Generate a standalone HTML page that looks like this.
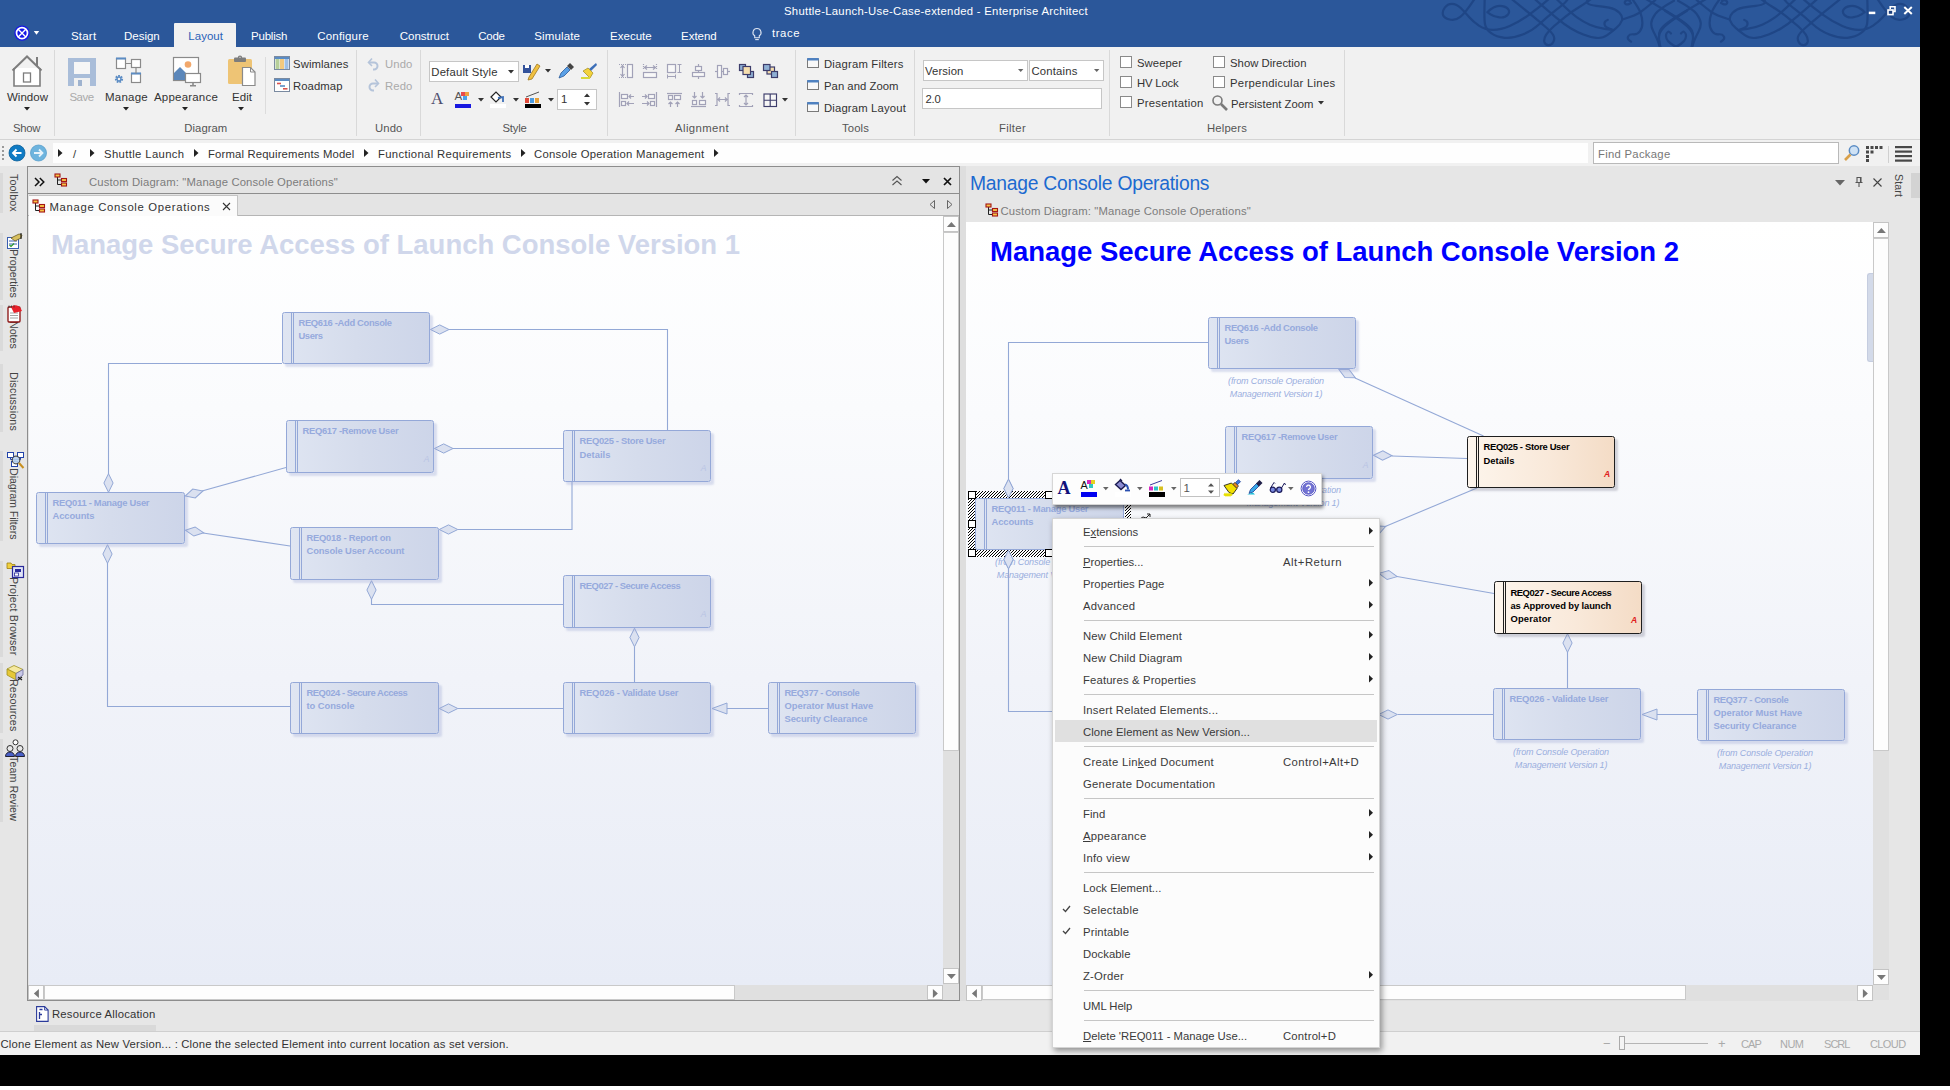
<!DOCTYPE html>
<html><head><meta charset="utf-8"><title>Enterprise Architect</title>
<style>
*{box-sizing:border-box;margin:0;padding:0}
html,body{width:1950px;height:1090px;overflow:hidden;background:#000;font-family:"Liberation Sans",sans-serif;}
.t{position:absolute;white-space:nowrap;display:block}
.r{position:absolute}
svg{position:absolute;overflow:visible}
#win{position:absolute;left:0;top:0;width:1920px;height:1055px;background:#e6e6e6;overflow:hidden}
</style></head><body>
<div id="win">
<div class="r" style="left:0px;top:0px;width:1920px;height:47px;background:#2b579a;"></div>
<svg style="left:1676px;top:0" width="1" height="47" viewBox="0 0 1 47" fill="none" stroke="#1f4686" stroke-width="2.200" stroke-linecap="round" stroke-linejoin="round"><g><path d="M-201.5 -1.0Q-210.5 12.8 -215.7 16.9Q-220.8 21.0 -226.4 19.5Q-232.0 18.0 -233.0 14.8Q-234.0 11.5 -231.2 7.7Q-228.5 3.8 -224.0 3.8Q-219.5 3.8 -215.0 8.3Q-210.5 12.8 -206.7 17.3Q-202.8 21.8 -197.1 25.6Q-191.3 29.5 -183.6 29.8Q-175.9 30.0 -166.3 25.9Q-156.7 21.8 -147.1 14.8Q-137.4 7.7 -132.3 3.4L-127.2 -1.0"/><path d="M-191.3 -1.0Q-192.0 19.0 -191.0 24.2Q-190.0 29.5 -184.8 33.2Q-179.7 37.0 -171.3 37.8Q-163.0 38.5 -153.4 34.6Q-143.8 30.8 -136.2 23.8Q-128.5 16.7 -120.2 10.2Q-111.8 3.8 -109.9 1.4L-108.0 -1.0"/><path d="M-188.7 12.2Q-182.3 5.8 -176.6 5.8Q-170.8 5.8 -168.2 8.7Q-165.6 11.5 -168.2 14.8Q-170.8 18.0 -176.6 17.4Q-182.3 16.7 -185.5 14.4L-188.7 12.2"/><path d="M-164.4 -1.0Q-150.3 10.3 -142.6 16.6Q-134.9 23.0 -129.8 27.5Q-124.6 32.0 -122.7 35.2Q-120.8 38.5 -122.7 42.0Q-124.6 45.5 -127.8 45.2Q-131.0 44.9 -131.7 41.7Q-132.3 38.5 -129.8 34.6Q-127.2 30.8 -122.1 26.3Q-116.9 21.8 -110.5 16.6Q-104.0 11.5 -96.3 6.8Q-88.7 2.0 -86.8 0.5L-84.9 -1.0"/><path d="M-141.3 -1.0Q-127.2 11.5 -119.5 17.9Q-111.8 24.4 -105.4 28.2Q-99.0 32.0 -92.6 34.6Q-86.2 37.2 -79.8 37.9Q-73.3 38.5 -68.8 35.2Q-64.4 32.0 -59.9 28.2Q-55.4 24.4 -54.1 20.5Q-52.8 16.7 -56.6 12.8Q-60.5 9.0 -66.9 7.7Q-73.3 6.4 -79.8 5.8Q-86.2 5.1 -88.1 3.5Q-90.0 2.0 -88.5 0.5L-87.0 -1.0"/><path d="M-63.0 30.0Q-70.8 27.6 -71.4 24.7Q-72.0 21.8 -70.1 20.9L-68.2 19.9"/><path d="M-119.5 -1.0Q-105.4 12.8 -99.0 17.3Q-92.6 21.8 -86.2 24.7Q-79.7 27.6 -71.3 28.8L-63.0 30.0"/><path d="M-52.8 19.2Q-40.0 15.4 -34.9 11.6Q-29.7 7.7 -25.9 4.5Q-22.0 1.3 -21.0 0.2L-20.0 -1.0"/><path d="M-43.8 -1.0Q-37.4 7.7 -35.5 12.8Q-33.6 18.0 -33.6 23.1Q-33.6 28.2 -36.2 31.4Q-38.7 34.6 -42.5 34.3Q-46.4 34.0 -47.7 36.2Q-49.0 38.5 -47.0 40.1L-45.0 41.7"/><path d="M-30.0 -1.0Q-15.0 8.0 -7.3 12.4Q0.3 16.8 7.3 21.9Q14.3 27.0 16.0 30.8Q17.6 34.5 16.8 41.2L15.9 48.0"/><path d="M-2.1 0.8Q-16.9 9.0 -20.6 13.9Q-24.3 18.9 -24.7 22.9Q-25.1 27.0 -22.6 31.5Q-20.2 36.0 -18.5 40.1Q-16.9 44.3 -16.4 46.1L-16.0 48.0"/><path d="M11.0 10.7Q-6.2 21.3 -11.1 26.2Q-16.0 31.2 -16.9 34.9Q-17.7 38.6 -16.5 43.3L-15.3 48.0"/><path d="M-5.0 33.5Q-7.0 31.0 -8.2 32.0Q-9.5 33.0 -9.9 34.5Q-10.3 36.0 -9.5 38.5Q-8.7 41.0 -5.3 43.5Q-2.0 46.0 -1.0 46.2L0.0 46.5"/><path d="M-46.0 1.0Q-49.0 -0.5 -50.5 1.0Q-52.0 2.5 -50.5 3.8Q-49.0 5.0 -47.0 4.0L-45.0 3.0"/></g><g transform="scale(-1 1)"><path d="M-201.5 -1.0Q-210.5 12.8 -215.7 16.9Q-220.8 21.0 -226.4 19.5Q-232.0 18.0 -233.0 14.8Q-234.0 11.5 -231.2 7.7Q-228.5 3.8 -224.0 3.8Q-219.5 3.8 -215.0 8.3Q-210.5 12.8 -206.7 17.3Q-202.8 21.8 -197.1 25.6Q-191.3 29.5 -183.6 29.8Q-175.9 30.0 -166.3 25.9Q-156.7 21.8 -147.1 14.8Q-137.4 7.7 -132.3 3.4L-127.2 -1.0"/><path d="M-191.3 -1.0Q-192.0 19.0 -191.0 24.2Q-190.0 29.5 -184.8 33.2Q-179.7 37.0 -171.3 37.8Q-163.0 38.5 -153.4 34.6Q-143.8 30.8 -136.2 23.8Q-128.5 16.7 -120.2 10.2Q-111.8 3.8 -109.9 1.4L-108.0 -1.0"/><path d="M-188.7 12.2Q-182.3 5.8 -176.6 5.8Q-170.8 5.8 -168.2 8.7Q-165.6 11.5 -168.2 14.8Q-170.8 18.0 -176.6 17.4Q-182.3 16.7 -185.5 14.4L-188.7 12.2"/><path d="M-164.4 -1.0Q-150.3 10.3 -142.6 16.6Q-134.9 23.0 -129.8 27.5Q-124.6 32.0 -122.7 35.2Q-120.8 38.5 -122.7 42.0Q-124.6 45.5 -127.8 45.2Q-131.0 44.9 -131.7 41.7Q-132.3 38.5 -129.8 34.6Q-127.2 30.8 -122.1 26.3Q-116.9 21.8 -110.5 16.6Q-104.0 11.5 -96.3 6.8Q-88.7 2.0 -86.8 0.5L-84.9 -1.0"/><path d="M-141.3 -1.0Q-127.2 11.5 -119.5 17.9Q-111.8 24.4 -105.4 28.2Q-99.0 32.0 -92.6 34.6Q-86.2 37.2 -79.8 37.9Q-73.3 38.5 -68.8 35.2Q-64.4 32.0 -59.9 28.2Q-55.4 24.4 -54.1 20.5Q-52.8 16.7 -56.6 12.8Q-60.5 9.0 -66.9 7.7Q-73.3 6.4 -79.8 5.8Q-86.2 5.1 -88.1 3.5Q-90.0 2.0 -88.5 0.5L-87.0 -1.0"/><path d="M-63.0 30.0Q-70.8 27.6 -71.4 24.7Q-72.0 21.8 -70.1 20.9L-68.2 19.9"/><path d="M-119.5 -1.0Q-105.4 12.8 -99.0 17.3Q-92.6 21.8 -86.2 24.7Q-79.7 27.6 -71.3 28.8L-63.0 30.0"/><path d="M-52.8 19.2Q-40.0 15.4 -34.9 11.6Q-29.7 7.7 -25.9 4.5Q-22.0 1.3 -21.0 0.2L-20.0 -1.0"/><path d="M-43.8 -1.0Q-37.4 7.7 -35.5 12.8Q-33.6 18.0 -33.6 23.1Q-33.6 28.2 -36.2 31.4Q-38.7 34.6 -42.5 34.3Q-46.4 34.0 -47.7 36.2Q-49.0 38.5 -47.0 40.1L-45.0 41.7"/><path d="M-30.0 -1.0Q-15.0 8.0 -7.3 12.4Q0.3 16.8 7.3 21.9Q14.3 27.0 16.0 30.8Q17.6 34.5 16.8 41.2L15.9 48.0"/><path d="M-2.1 0.8Q-16.9 9.0 -20.6 13.9Q-24.3 18.9 -24.7 22.9Q-25.1 27.0 -22.6 31.5Q-20.2 36.0 -18.5 40.1Q-16.9 44.3 -16.4 46.1L-16.0 48.0"/><path d="M11.0 10.7Q-6.2 21.3 -11.1 26.2Q-16.0 31.2 -16.9 34.9Q-17.7 38.6 -16.5 43.3L-15.3 48.0"/><path d="M-5.0 33.5Q-7.0 31.0 -8.2 32.0Q-9.5 33.0 -9.9 34.5Q-10.3 36.0 -9.5 38.5Q-8.7 41.0 -5.3 43.5Q-2.0 46.0 -1.0 46.2L0.0 46.5"/><path d="M-46.0 1.0Q-49.0 -0.5 -50.5 1.0Q-52.0 2.5 -50.5 3.8Q-49.0 5.0 -47.0 4.0L-45.0 3.0"/></g></svg>
<div class="r" style="left:1430px;top:47px;width:480px;height:3px;background:#f1f1f1;"></div>
<svg style="left:1860px;top:0" width="60" height="22" viewBox="0 0 60 22"><g stroke="#fff" fill="none">
<path d="M8.800 12.900h6.500" stroke-width="2.500"/><path d="M30.200 9v-2.300h4.800v4.800h-2" stroke-width="1.600"/><rect x="28" y="10" width="5" height="4.600" stroke-width="1.600" fill="#1d4080"/><path d="M44.300 7l7.500 7M51.800 7l-7.500 7" stroke-width="2"/></g></svg>
<span class="t" style="left:784.0px;top:3.5px;font-size:11.3px;line-height:15px;color:#fff;letter-spacing:0.286px;">Shuttle-Launch-Use-Case-extended - Enterprise Architect</span>
<svg style="left:12px;top:24px" width="34" height="18" viewBox="0 0 34 18">
<circle cx="10" cy="9.100" r="7.700" fill="#1616e8"/><circle cx="10" cy="9.100" r="5.500" fill="none" stroke="#fff" stroke-width="1.700"/><path d="M6.200 5.300l7.600 7.600M13.800 5.300l-7.600 7.600" stroke="#fff" stroke-width="1.400"/>
<path d="M21.800 7h5.400l-2.700 3.700z" fill="#fff"/></svg>
<div class="r" style="left:174px;top:23px;width:62px;height:25px;background:#f1f1f1;border-radius:1px 1px 0 0;"></div>
<span class="t" style="left:71.0px;top:28.5px;font-size:11.5px;line-height:15px;color:#fff;letter-spacing:0.203px;">Start</span>
<span class="t" style="left:124.0px;top:28.5px;font-size:11.5px;line-height:15px;color:#fff;letter-spacing:-0.016px;">Design</span>
<span class="t" style="left:188.3px;top:28.5px;font-size:11.5px;line-height:15px;color:#2b62b8;letter-spacing:0.029px;">Layout</span>
<span class="t" style="left:251.0px;top:28.5px;font-size:11.5px;line-height:15px;color:#fff;letter-spacing:-0.202px;">Publish</span>
<span class="t" style="left:317.3px;top:28.5px;font-size:11.5px;line-height:15px;color:#fff;letter-spacing:0.171px;">Configure</span>
<span class="t" style="left:399.7px;top:28.5px;font-size:11.5px;line-height:15px;color:#fff;letter-spacing:0.010px;">Construct</span>
<span class="t" style="left:478.3px;top:28.5px;font-size:11.5px;line-height:15px;color:#fff;letter-spacing:-0.273px;">Code</span>
<span class="t" style="left:534.3px;top:28.5px;font-size:11.5px;line-height:15px;color:#fff;letter-spacing:0.120px;">Simulate</span>
<span class="t" style="left:610.0px;top:28.5px;font-size:11.5px;line-height:15px;color:#fff;letter-spacing:0.021px;">Execute</span>
<span class="t" style="left:681.0px;top:28.5px;font-size:11.5px;line-height:15px;color:#fff;letter-spacing:-0.017px;">Extend</span>
<span class="t" style="left:772.0px;top:25.5px;font-size:11.3px;line-height:15px;color:#fff;letter-spacing:0.576px;">trace</span>
<svg style="left:750px;top:27px" width="14" height="16" viewBox="0 0 14 16" fill="none" stroke="#dfe6f2" stroke-width="1.1"><path d="M7 1.5a4 4 0 0 0-2.3 7.3v2h4.6v-2A4 4 0 0 0 7 1.5z"/><path d="M5.2 12.6h3.6"/></svg>
<div class="r" style="left:0px;top:47px;width:1920px;height:93px;background:#f1f1f1;"></div>
<div class="r" style="left:0px;top:139px;width:1920px;height:1px;background:#d4d4d4;"></div>
<div class="r" style="left:54px;top:50px;width:1px;height:86px;background:#d9d9d9;"></div>
<div class="r" style="left:356px;top:50px;width:1px;height:86px;background:#d9d9d9;"></div>
<div class="r" style="left:420px;top:50px;width:1px;height:86px;background:#d9d9d9;"></div>
<div class="r" style="left:607px;top:50px;width:1px;height:86px;background:#d9d9d9;"></div>
<div class="r" style="left:795px;top:50px;width:1px;height:86px;background:#d9d9d9;"></div>
<div class="r" style="left:914px;top:50px;width:1px;height:86px;background:#d9d9d9;"></div>
<div class="r" style="left:1109px;top:50px;width:1px;height:86px;background:#d9d9d9;"></div>
<div class="r" style="left:1344px;top:50px;width:1px;height:86px;background:#d9d9d9;"></div>
<div class="r" style="left:265px;top:57px;width:1px;height:57px;background:#dcdcdc;"></div>
<span class="t" style="left:13.0px;top:120.5px;font-size:11.3px;line-height:15px;color:#555;letter-spacing:-0.317px;">Show</span>
<span class="t" style="left:184.3px;top:120.5px;font-size:11.3px;line-height:15px;color:#555;letter-spacing:0.043px;">Diagram</span>
<span class="t" style="left:375.0px;top:120.5px;font-size:11.3px;line-height:15px;color:#555;letter-spacing:0.121px;">Undo</span>
<span class="t" style="left:502.5px;top:120.5px;font-size:11.3px;line-height:15px;color:#555;letter-spacing:-0.224px;">Style</span>
<span class="t" style="left:675.0px;top:120.5px;font-size:11.3px;line-height:15px;color:#555;letter-spacing:0.417px;">Alignment</span>
<span class="t" style="left:842.0px;top:120.5px;font-size:11.3px;line-height:15px;color:#555;letter-spacing:0.124px;">Tools</span>
<span class="t" style="left:999.0px;top:120.5px;font-size:11.3px;line-height:15px;color:#555;letter-spacing:0.315px;">Filter</span>
<span class="t" style="left:1207.0px;top:120.5px;font-size:11.3px;line-height:15px;color:#555;letter-spacing:0.152px;">Helpers</span>
<span class="t" style="left:7.0px;top:89.8px;font-size:11.5px;line-height:15px;color:#333;letter-spacing:0.017px;">Window</span>
<span class="t" style="left:69.5px;top:89.8px;font-size:11.5px;line-height:15px;color:#aaa;letter-spacing:-0.553px;">Save</span>
<span class="t" style="left:105.0px;top:89.8px;font-size:11.5px;line-height:15px;color:#333;letter-spacing:0.241px;">Manage</span>
<span class="t" style="left:154.0px;top:89.8px;font-size:11.5px;line-height:15px;color:#333;letter-spacing:0.198px;">Appearance</span>
<span class="t" style="left:232.0px;top:89.8px;font-size:11.5px;line-height:15px;color:#333;letter-spacing:0.046px;">Edit</span>
<svg style="left:24px;top:107px" width="7" height="4" viewBox="0 0 7 4"><path d="M0 0h6l-3 3.4z" fill="#222"/></svg>
<svg style="left:123px;top:107px" width="7" height="4" viewBox="0 0 7 4"><path d="M0 0h6l-3 3.4z" fill="#222"/></svg>
<svg style="left:182px;top:107px" width="7" height="4" viewBox="0 0 7 4"><path d="M0 0h6l-3 3.4z" fill="#222"/></svg>
<svg style="left:238px;top:107px" width="7" height="4" viewBox="0 0 7 4"><path d="M0 0h6l-3 3.4z" fill="#222"/></svg>
<svg style="left:11px;top:54px" width="34" height="34" viewBox="0 0 34 34" fill="none">
<path d="M3 14v18h26V14" fill="#fff" stroke="#7d7d7d" stroke-width="1.6"/><path d="M1.5 16.5L16 2.5l14.5 14" stroke="#7d7d7d" stroke-width="2"/><path d="M26 3v9" stroke="#7d7d7d" stroke-width="2"/><rect x="12.5" y="19" width="7" height="9" fill="#fff" stroke="#7d7d7d" stroke-width="1.3"/></svg>
<svg style="left:68px;top:58px" width="28" height="28" viewBox="0 0 28 28"><rect width="28" height="28" fill="#a9bdd9"/><rect x="6" y="4" width="16" height="12" fill="#f6f6f6"/><rect x="6" y="20" width="16" height="8" fill="#f1f1f1"/><rect x="10" y="22" width="4" height="6" fill="#9fb3cf"/></svg>
<svg style="left:113px;top:56px" width="30" height="30" viewBox="0 0 30 30" fill="none"><g stroke="#8a8a8a" stroke-width="1.2" fill="#fff"><rect x="3.5" y="2.5" width="9" height="10"/><rect x="18.5" y="3.5" width="9" height="8"/><rect x="18.5" y="17.5" width="9" height="9"/></g><path d="M3 2.5h10M18 17.5h10" stroke="#5b8cc4" stroke-width="1.8"/><path d="M12.5 7.5h6M23 11.5v6" stroke="#8a8a8a" stroke-width="1.2"/><circle cx="6" cy="23" r="3" stroke="#5b8cc4" stroke-width="2.2" stroke-dasharray="1.6 1"/><circle cx="6" cy="23" r="2" stroke="#5b8cc4" stroke-width="1.4"/></svg>
<svg style="left:172px;top:56px" width="30" height="31" viewBox="0 0 30 31" fill="none"><rect x="1.5" y="1.5" width="25" height="23" fill="#fff" stroke="#8a8a8a" stroke-width="1.2"/><path d="M2 24V17l6-6 7 7v6z" fill="#5b87ba"/><circle cx="16" cy="8.5" r="3.3" fill="#f2a86b"/><rect x="13.5" y="17.5" width="15" height="9" fill="#fff" stroke="#8a8a8a" stroke-width="1.2"/><path d="M21 26.5v3M18 29.8h6" stroke="#8a8a8a" stroke-width="1.6"/></svg>
<svg style="left:227px;top:55px" width="30" height="32" viewBox="0 0 30 32" fill="none"><rect x="1" y="4" width="24" height="25" rx="1.5" fill="#eec475"/><rect x="7" y="2.5" width="12" height="4.5" rx="1" fill="#7d7d7d"/><circle cx="13" cy="2.8" r="1.6" stroke="#7d7d7d" stroke-width="1.2"/><path d="M15.5 12.5h8l4.5 4.5v13.5h-12.5z" fill="#fff" stroke="#8a8a8a" stroke-width="1.2"/><path d="M23.5 12.5v4.5h4.5" stroke="#8a8a8a" stroke-width="1"/></svg>
<svg style="left:274px;top:56px" width="16" height="14" viewBox="0 0 16 14"><rect x=".5" y=".5" width="15" height="13" fill="#fff" stroke="#7a8aa0"/><rect x="1" y="1" width="14" height="2" fill="#5b8cc4"/><rect x="1.5" y="3" width="4" height="10" fill="#b6cf9a"/><rect x="6" y="3" width="4" height="10" fill="#f2c97e"/><rect x="10.5" y="3" width="4" height="10" fill="#9fc0e6"/></svg>
<svg style="left:274px;top:78px" width="16" height="14" viewBox="0 0 16 14"><rect x=".5" y=".5" width="15" height="13" fill="#fff" stroke="#7a8aa0"/><rect x="1" y="1" width="14" height="2" fill="#5b8cc4"/><path d="M3 5.5h4" stroke="#d9534f" stroke-width="1.6"/><path d="M6 8h5" stroke="#5b8cc4" stroke-width="1.6"/><path d="M9 10.8h4.5" stroke="#d9534f" stroke-width="1.6"/></svg>
<span class="t" style="left:293.0px;top:56.5px;font-size:11.3px;line-height:15px;color:#333;letter-spacing:0.096px;">Swimlanes</span>
<span class="t" style="left:293.0px;top:78.5px;font-size:11.3px;line-height:15px;color:#333;letter-spacing:0.072px;">Roadmap</span>
<svg style="left:367px;top:57px" width="14" height="13" viewBox="0 0 14 13" fill="none" stroke="#b5c4da" stroke-width="2"><path d="M2 5.5h5a3.5 3.5 0 0 1 0 7H6"/><path d="M5 1.5L1.5 5.5 5 9" stroke-width="1.6"/></svg>
<svg style="left:366px;top:78px" width="14" height="13" viewBox="0 0 14 13" fill="none" stroke="#b5c4da" stroke-width="2"><path d="M12 5.5H7a3.5 3.5 0 0 0 0 7h1"/><path d="M9 1.5l3.5 4L9 9" stroke-width="1.6"/></svg>
<span class="t" style="left:385.0px;top:56.5px;font-size:11.3px;line-height:15px;color:#aaa;letter-spacing:0.121px;">Undo</span>
<span class="t" style="left:385.0px;top:78.5px;font-size:11.3px;line-height:15px;color:#aaa;letter-spacing:0.121px;">Redo</span>
<div class="r" style="left:429px;top:60.5px;width:89.5px;height:21px;background:#fff;border:1px solid #c6c6c6;"></div>
<span class="t" style="left:431.3px;top:64.5px;font-size:11.3px;line-height:15px;color:#333;letter-spacing:0.187px;">Default Style</span>
<svg style="left:508px;top:70px" width="6" height="4"><path d="M0 0h6l-3 3.4z" fill="#333"/></svg>
<svg style="left:522px;top:62px" width="20" height="18" viewBox="0 0 20 18"><rect x="1" y="3" width="8" height="8" fill="#33529a"/><rect x="3" y="3" width="4" height="3" fill="#fff"/><path d="M7 15L15 2l3 2-8 13-4 1z" fill="#f0c040" stroke="#a07820" stroke-width=".8"/></svg>
<svg style="left:545px;top:69px" width="6" height="4"><path d="M0 0h6l-3 3.4z" fill="#333"/></svg>
<svg style="left:557px;top:62px" width="18" height="18" viewBox="0 0 18 18"><path d="M2 16l2-5 6-6 3 3-6 6z" fill="#5aa0e6" stroke="#2a5a9a" stroke-width=".8"/><path d="M10 4l3-3 4 4-3 3z" fill="#444"/></svg>
<svg style="left:580px;top:62px" width="18" height="18" viewBox="0 0 18 18"><path d="M16 1l1 2-6 6-2-2z" fill="#3d6fb8"/><path d="M3 9l5-3 5 5-3 5z" fill="#f3d23c" stroke="#a08a20" stroke-width=".7"/><path d="M1 16h9" stroke="#d8d838" stroke-width="2"/></svg>
<span class="t" style="left:431.0px;top:87.5px;font-size:17px;line-height:22px;color:#4e4e6e;font-family:'Liberation Serif',serif;">A</span>
<span class="t" style="left:454.5px;top:89.0px;font-size:11.5px;line-height:15px;color:#555;">A</span>
<div class="r" style="left:461px;top:92px;width:4px;height:3.5px;background:#e84a4a;"></div><div class="r" style="left:465px;top:92px;width:4px;height:3.5px;background:#f0a040;"></div><div class="r" style="left:463px;top:95.5px;width:4px;height:4px;background:#4aa0e8;"></div>
<div class="r" style="left:455px;top:104px;width:16px;height:3.5px;background:#1818e0;"></div>
<svg style="left:478px;top:98px" width="6" height="4"><path d="M0 0h6l-3 3.4z" fill="#333"/></svg>
<svg style="left:489px;top:90px" width="18" height="16" viewBox="0 0 18 16" fill="none"><path d="M2 7l5-5 5 5-5 5z" stroke="#222" stroke-width="1.2" fill="#fff"/><path d="M9 8l5-1v5" stroke="#3d6fb8" stroke-width="1.8"/></svg>
<div class="r" style="left:490px;top:104px;width:16px;height:3.5px;background:#fff;"></div>
<svg style="left:513px;top:98px" width="6" height="4"><path d="M0 0h6l-3 3.4z" fill="#333"/></svg>
<svg style="left:524px;top:90px" width="18" height="14" viewBox="0 0 18 14"><path d="M2 7L15 2" stroke="#555" stroke-width="1"/><rect x="1" y="8" width="4" height="5" fill="#e04a3a"/><rect x="6" y="8" width="4" height="5" fill="#4a9ae0"/><rect x="11" y="8" width="4" height="5" fill="#e6a03a"/></svg>
<div class="r" style="left:525px;top:104px;width:16px;height:3.5px;background:#000;"></div>
<svg style="left:548px;top:98px" width="6" height="4"><path d="M0 0h6l-3 3.4z" fill="#333"/></svg>
<div class="r" style="left:557px;top:89px;width:40px;height:21px;background:#fff;border:1px solid #c6c6c6;"></div>
<span class="t" style="left:561.0px;top:92.0px;font-size:11.3px;line-height:15px;color:#333;">1</span>
<svg style="left:584px;top:93px" width="7" height="13"><path d="M0 4h6l-3-3.4zM0 9h6l-3 3.4z" fill="#333"/></svg>
<svg style="left:617px;top:62px" width="18" height="18" viewBox="0 0 18 18" fill="none" stroke="#a2a2b8" stroke-width="1.2"><path d="M2 2.500h7M2 15.500h7" stroke-dasharray="1 1"/><path d="M5.500 3.500v11M3.500 6l2-2.500 2 2.500M3.500 12l2 2.500 2-2.500"/><rect x="10.500" y="2.500" width="5" height="13" fill="#f8f8f8"/></svg>
<svg style="left:641px;top:62px" width="18" height="18" viewBox="0 0 18 18" fill="none" stroke="#a2a2b8" stroke-width="1.2"><path d="M2.500 2v6M15.500 2v6" stroke-dasharray="1 1"/><path d="M3.500 5.500h11M6 3.500l-2.500 2 2.500 2M12 3.500l2.500 2-2.500 2"/><rect x="2.500" y="10.500" width="13" height="5" fill="#f8f8f8"/></svg>
<svg style="left:665px;top:62px" width="18" height="18" viewBox="0 0 18 18" fill="none" stroke="#a2a2b8" stroke-width="1.2"><rect x="2.500" y="2.500" width="8" height="8" fill="#f8f8f8"/><path d="M14.500 2.500v8M12.500 2.500h4M12.500 10.500h4M2.500 14.500h8M2.500 12.500v4M10.500 12.500v4" stroke-width="1"/></svg>
<svg style="left:689px;top:62px" width="18" height="18" viewBox="0 0 18 18" fill="none" stroke="#a2a2b8" stroke-width="1.2"><path d="M9.500 2v15"/><rect x="6.500" y="4.500" width="6" height="4" fill="#f8f8f8"/><rect x="3.500" y="10.500" width="12" height="4" fill="#f8f8f8"/></svg>
<svg style="left:713px;top:62px" width="18" height="18" viewBox="0 0 18 18" fill="none" stroke="#a2a2b8" stroke-width="1.2"><path d="M2 9.500h15"/><rect x="4.500" y="3.500" width="4" height="12" fill="#f8f8f8"/><rect x="10.500" y="6.500" width="4" height="6" fill="#f8f8f8"/></svg>
<svg style="left:737px;top:62px" width="18" height="18" viewBox="0 0 18 18" stroke="#3d3d6b" stroke-width="1.200"><rect x="2.500" y="2.500" width="6" height="6" fill="#8fb0d4"/><rect x="10.500" y="9.500" width="6" height="6" fill="#8fb0d4"/><rect x="6" y="4.500" width="7.500" height="8" fill="#f5deae"/></svg>
<svg style="left:761px;top:62px" width="18" height="18" viewBox="0 0 18 18" stroke="#3d3d6b" stroke-width="1.200"><rect x="6" y="5" width="7.500" height="7" fill="#f5deae"/><rect x="2.500" y="2.500" width="6.500" height="6" fill="#8fb0d4"/><rect x="10.500" y="9.500" width="6" height="6" fill="#8fb0d4"/></svg>
<svg style="left:617px;top:91px" width="18" height="18" viewBox="0 0 18 18" fill="none" stroke="#a2a2b8" stroke-width="1.2"><path d="M2.500 1v15"/><rect x="4.500" y="3.500" width="6" height="4" fill="#f8f8f8"/><rect x="4.500" y="10.500" width="4" height="4" fill="#f8f8f8"/><path d="M17 5.500h-5M14 3.500l-2 2 2 2M17 12.500h-7M12 10.500l-2 2 2 2"/></svg>
<svg style="left:641px;top:91px" width="18" height="18" viewBox="0 0 18 18" fill="none" stroke="#a2a2b8" stroke-width="1.2"><path d="M15.500 1v15"/><rect x="7.500" y="3.500" width="6" height="4" fill="#f8f8f8"/><rect x="9.500" y="10.500" width="4" height="4" fill="#f8f8f8"/><path d="M1 5.500h5M4 3.500l2 2-2 2M1 12.500h7M6 10.500l2 2-2 2"/></svg>
<svg style="left:665px;top:91px" width="18" height="18" viewBox="0 0 18 18" fill="none" stroke="#a2a2b8" stroke-width="1.2"><path d="M2 2.500h15"/><rect x="3.500" y="4.500" width="4" height="4" fill="#f8f8f8"/><rect x="9.500" y="4.500" width="6" height="4" fill="#f8f8f8"/><path d="M5.500 16v-5M3.500 13l2-2 2 2M12.500 16v-5M10.500 13l2-2 2 2"/></svg>
<svg style="left:689px;top:91px" width="18" height="18" viewBox="0 0 18 18" fill="none" stroke="#a2a2b8" stroke-width="1.2"><path d="M2 15.500h15"/><rect x="3.500" y="9.500" width="4" height="4" fill="#f8f8f8"/><rect x="10.500" y="9.500" width="6" height="4" fill="#f8f8f8"/><path d="M5.500 1v6M3.500 5l2 2 2-2M13.500 1v6M11.500 5l2 2 2-2"/></svg>
<svg style="left:713px;top:91px" width="18" height="18" viewBox="0 0 18 18" fill="none" stroke="#a2a2b8" stroke-width="1.2"><path d="M2 2.500h2v12H2M17 2.500h-2v12h2M5 8.500h9M7 6.500l-2 2 2 2M12 6.500l2 2-2 2"/></svg>
<svg style="left:737px;top:91px" width="18" height="18" viewBox="0 0 18 18" fill="none" stroke="#a2a2b8" stroke-width="1.2"><path d="M2.500 4v-1.500h13V4M2.500 14v1.500h13V14M9 4v10M7 6l2-2 2 2M7 12l2 2 2-2"/></svg>
<svg style="left:762px;top:92px" width="16" height="16" viewBox="0 0 16 16" fill="#f6f6f6" stroke="#3d3d6b" stroke-width="1.150"><rect x="2" y="2" width="12.500" height="12.500"/><path d="M8.200 2v12.500M2 8.200h12.500"/></svg>
<svg style="left:782px;top:98px" width="6" height="4"><path d="M0 0h6l-3 3.400z" fill="#333"/></svg>
<svg style="left:807px;top:58px" width="12" height="10" viewBox="0 0 12 10"><rect x=".5" y="1" width="11" height="8.500" fill="#f8f8f8" stroke="#7a7a7a"/><rect x="0" y="0" width="12" height="2.600" rx="1" fill="#4f81c0"/></svg>
<svg style="left:807px;top:80px" width="12" height="10" viewBox="0 0 12 10"><rect x=".5" y="1" width="11" height="8.500" fill="#f8f8f8" stroke="#7a7a7a"/><rect x="0" y="0" width="12" height="2.600" rx="1" fill="#4f81c0"/></svg>
<svg style="left:807px;top:102px" width="12" height="10" viewBox="0 0 12 10"><rect x=".5" y="1" width="11" height="8.500" fill="#f8f8f8" stroke="#7a7a7a"/><rect x="0" y="0" width="12" height="2.600" rx="1" fill="#4f81c0"/></svg>
<span class="t" style="left:824.0px;top:56.5px;font-size:11.3px;line-height:15px;color:#333;letter-spacing:0.193px;">Diagram Filters</span>
<span class="t" style="left:824.0px;top:78.5px;font-size:11.3px;line-height:15px;color:#333;letter-spacing:0.032px;">Pan and Zoom</span>
<span class="t" style="left:824.0px;top:100.5px;font-size:11.3px;line-height:15px;color:#333;letter-spacing:0.160px;">Diagram Layout</span>
<div class="r" style="left:923px;top:60px;width:104.5px;height:20.5px;background:#fff;border:1px solid #c6c6c6;"></div>
<div class="r" style="left:1029px;top:60px;width:74.5px;height:20.5px;background:#fff;border:1px solid #c6c6c6;"></div>
<div class="r" style="left:922px;top:88px;width:180px;height:21px;background:#fff;border:1px solid #c6c6c6;"></div>
<span class="t" style="left:925.0px;top:63.5px;font-size:11.3px;line-height:15px;color:#333;letter-spacing:0.116px;">Version</span>
<span class="t" style="left:1031.5px;top:63.5px;font-size:11.3px;line-height:15px;color:#333;letter-spacing:0.175px;">Contains</span>
<span class="t" style="left:925.5px;top:91.5px;font-size:11.3px;line-height:15px;color:#333;letter-spacing:-0.236px;">2.0</span>
<svg style="left:1017.500px;top:69px" width="6" height="4"><path d="M0 0h5.400l-2.700 3.100z" fill="#666"/></svg>
<svg style="left:1093.500px;top:69px" width="6" height="4"><path d="M0 0h5.400l-2.700 3.100z" fill="#666"/></svg>
<div class="r" style="left:1120px;top:56px;width:12px;height:12px;background:#fff;border:1px solid #8a8a8a;"></div>
<div class="r" style="left:1120px;top:76px;width:12px;height:12px;background:#fff;border:1px solid #8a8a8a;"></div>
<div class="r" style="left:1120px;top:96px;width:12px;height:12px;background:#fff;border:1px solid #8a8a8a;"></div>
<div class="r" style="left:1213px;top:56px;width:12px;height:12px;background:#fff;border:1px solid #8a8a8a;"></div>
<div class="r" style="left:1213px;top:76px;width:12px;height:12px;background:#fff;border:1px solid #8a8a8a;"></div>
<span class="t" style="left:1137.0px;top:55.5px;font-size:11.3px;line-height:15px;color:#333;letter-spacing:0.057px;">Sweeper</span>
<span class="t" style="left:1137.0px;top:75.5px;font-size:11.3px;line-height:15px;color:#333;letter-spacing:-0.172px;">HV Lock</span>
<span class="t" style="left:1137.0px;top:95.5px;font-size:11.3px;line-height:15px;color:#333;letter-spacing:0.255px;">Presentation</span>
<span class="t" style="left:1230.0px;top:55.5px;font-size:11.3px;line-height:15px;color:#333;letter-spacing:0.036px;">Show Direction</span>
<span class="t" style="left:1230.0px;top:75.5px;font-size:11.3px;line-height:15px;color:#333;letter-spacing:0.296px;">Perpendicular Lines</span>
<span class="t" style="left:1231.0px;top:96.5px;font-size:11.3px;line-height:15px;color:#333;letter-spacing:0.016px;">Persistent Zoom</span>
<svg style="left:1211px;top:94px" width="18" height="18" viewBox="0 0 18 18" fill="none"><circle cx="6.500" cy="6.500" r="4.500" stroke="#7a7a7a" stroke-width="1.600" fill="#f1f1f1"/><path d="M10 10l6 6" stroke="#7a7a7a" stroke-width="2.600"/></svg>
<svg style="left:1318px;top:101px" width="6" height="4"><path d="M0 0h6l-3 3.400z" fill="#333"/></svg>
<div class="r" style="left:0px;top:140px;width:1920px;height:26px;background:#f1f1f1;"></div>
<div class="r" style="left:53px;top:143px;width:1535px;height:20px;background:#fefefe;"></div>
<div class="r" style="left:2px;top:146px;width:1.5px;height:1.5px;background:#999;"></div><div class="r" style="left:2px;top:150px;width:1.5px;height:1.5px;background:#999;"></div><div class="r" style="left:2px;top:154px;width:1.5px;height:1.5px;background:#999;"></div><div class="r" style="left:2px;top:158px;width:1.5px;height:1.5px;background:#999;"></div>
<svg style="left:8px;top:144px" width="40" height="18" viewBox="0 0 40 18"><circle cx="9" cy="9" r="8" fill="#0f7bc4"/><circle cx="9" cy="9" r="8" fill="none" stroke="#0a5e98" stroke-width=".8"/><path d="M13.500 9H5M8.500 5.500L5 9l3.500 3.500" stroke="#fff" stroke-width="1.800" fill="none"/>
<circle cx="30.500" cy="9" r="8" fill="#6eb4de"/><circle cx="30.500" cy="9" r="8" fill="none" stroke="#5aa0cc" stroke-width=".8"/><path d="M26 9h8.500M31 5.500l3.500 3.500-3.500 3.500" stroke="#e8f3fa" stroke-width="1.800" fill="none"/></svg>
<svg style="left:58px;top:149px" width="5" height="8" viewBox="0 0 5 8"><path d="M0 0l4.500 4L0 8z" fill="#222"/></svg>
<svg style="left:90px;top:149px" width="5" height="8" viewBox="0 0 5 8"><path d="M0 0l4.500 4L0 8z" fill="#222"/></svg>
<svg style="left:194px;top:149px" width="5" height="8" viewBox="0 0 5 8"><path d="M0 0l4.500 4L0 8z" fill="#222"/></svg>
<svg style="left:364px;top:149px" width="5" height="8" viewBox="0 0 5 8"><path d="M0 0l4.500 4L0 8z" fill="#222"/></svg>
<svg style="left:521px;top:149px" width="5" height="8" viewBox="0 0 5 8"><path d="M0 0l4.500 4L0 8z" fill="#222"/></svg>
<svg style="left:714px;top:149px" width="5" height="8" viewBox="0 0 5 8"><path d="M0 0l4.500 4L0 8z" fill="#222"/></svg>
<span class="t" style="left:73.0px;top:147.0px;font-size:11.3px;line-height:15px;color:#333;">/</span>
<span class="t" style="left:104.0px;top:147.0px;font-size:11.3px;line-height:15px;color:#333;letter-spacing:0.365px;">Shuttle Launch</span>
<span class="t" style="left:208.0px;top:147.0px;font-size:11.3px;line-height:15px;color:#333;letter-spacing:0.158px;">Formal Requirements Model</span>
<span class="t" style="left:378.0px;top:147.0px;font-size:11.3px;line-height:15px;color:#333;letter-spacing:0.343px;">Functional Requirements</span>
<span class="t" style="left:534.0px;top:147.0px;font-size:11.3px;line-height:15px;color:#333;letter-spacing:0.257px;">Console Operation Management</span>
<div class="r" style="left:1593px;top:142.3px;width:245.5px;height:21.7px;background:#fff;border:1px solid #b9b9b9;"></div>
<span class="t" style="left:1598.0px;top:146.5px;font-size:11.3px;line-height:15px;color:#777;letter-spacing:0.284px;">Find Package</span>
<svg style="left:1842px;top:144px" width="20" height="18" viewBox="0 0 20 18" fill="none"><circle cx="12" cy="6.500" r="4.700" fill="#cfe2f5" stroke="#5b8cc4" stroke-width="1.500"/><path d="M8.500 10.500L3 16" stroke="#d9a04a" stroke-width="2.600"/></svg>
<svg style="left:1866px;top:146px" width="18" height="16" viewBox="0 0 18 16" fill="#484848"><rect x="0" y="0" width="3" height="3"/><rect x="4.500" y="0" width="3" height="3"/><rect x="9" y="0" width="3" height="3"/><rect x="13.500" y="0" width="3" height="3"/><rect x="0" y="4.500" width="3" height="3"/><rect x="4.500" y="4.500" width="3" height="3"/><rect x="0" y="9" width="3" height="3"/><rect x="0" y="13" width="3" height="3"/></svg>
<div class="r" style="left:1888px;top:146px;width:1px;height:17px;background:#d0d0d0;"></div>
<svg style="left:1895px;top:146px" width="18" height="16" viewBox="0 0 18 16" fill="#484848"><rect y="0" width="17" height="2.200"/><rect y="4.500" width="17" height="2.200"/><rect y="9" width="17" height="2.200"/><rect y="13.500" width="17" height="2.200"/></svg>
<div class="r" style="left:0px;top:166px;width:27px;height:866px;background:#e6e6e6;"></div>
<div class="r" style="left:0px;top:173px;width:3px;height:39.5px;background:#dadada;"></div>
<div class="r" style="left:0px;top:233px;width:3px;height:67px;background:#dadada;"></div>
<div class="r" style="left:0px;top:305px;width:3px;height:45.5px;background:#dadada;"></div>
<div class="r" style="left:0px;top:364px;width:3px;height:68px;background:#dadada;"></div>
<div class="r" style="left:0px;top:451px;width:3px;height:90px;background:#dadada;"></div>
<div class="r" style="left:0px;top:561px;width:3px;height:96px;background:#dadada;"></div>
<div class="r" style="left:0px;top:663px;width:3px;height:70px;background:#dadada;"></div>
<div class="r" style="left:0px;top:739px;width:3px;height:83px;background:#dadada;"></div>
<span class="t" style="left:21.7px;top:173.5px;font-size:10.7px;line-height:16px;color:#444;letter-spacing:0.131px;transform-origin:0 0;transform:rotate(90deg);">Toolbox</span>
<span class="t" style="left:21.7px;top:249.3px;font-size:10.7px;line-height:16px;color:#444;letter-spacing:0.023px;transform-origin:0 0;transform:rotate(90deg);">Properties</span>
<span class="t" style="left:21.7px;top:321px;font-size:10.7px;line-height:16px;color:#444;letter-spacing:-0.031px;transform-origin:0 0;transform:rotate(90deg);">Notes</span>
<span class="t" style="left:21.7px;top:371.5px;font-size:10.7px;line-height:16px;color:#444;letter-spacing:0.174px;transform-origin:0 0;transform:rotate(90deg);">Discussions</span>
<span class="t" style="left:21.7px;top:467.5px;font-size:10.7px;line-height:16px;color:#444;letter-spacing:-0.069px;transform-origin:0 0;transform:rotate(90deg);">Diagram Filters</span>
<span class="t" style="left:21.7px;top:577px;font-size:10.7px;line-height:16px;color:#444;letter-spacing:0.199px;transform-origin:0 0;transform:rotate(90deg);">Project Browser</span>
<span class="t" style="left:21.7px;top:679.2px;font-size:10.7px;line-height:16px;color:#444;letter-spacing:0.151px;transform-origin:0 0;transform:rotate(90deg);">Resources</span>
<span class="t" style="left:21.7px;top:756px;font-size:10.7px;line-height:16px;color:#444;letter-spacing:0.071px;transform-origin:0 0;transform:rotate(90deg);">Team Review</span>
<svg style="left:6px;top:232px" width="18" height="18" viewBox="0 0 18 18"><rect x="1.500" y="5.500" width="11" height="11" fill="#fff" stroke="#3a5fb0"/><path d="M3 9h8M3 12h8" stroke="#3a5fb0" stroke-width="1"/><path d="M3.500 13l1.500 1.500 3-3" stroke="#2a9a2a" stroke-width="1.200" fill="none"/><path d="M5 6l8-4 3 1-1 3-6 3z" fill="#d8c060" stroke="#6a5a20" stroke-width=".8"/><path d="M15 1v6" stroke="#222" stroke-width="1.200"/></svg>
<svg style="left:6px;top:304px" width="18" height="19" viewBox="0 0 18 19"><rect x="2" y="3" width="12" height="15" rx="1" fill="#fff" stroke="#8a1010" stroke-width="1.300"/><path d="M4 9h8M4 11.500h8M4 14h8" stroke="#999" stroke-width=".9"/><path d="M5 3c3-3 9-2 11 4l-8 2z" fill="#e8202a"/><path d="M3 1.500v2M5.500 1.500v2M8 1.500v2" stroke="#333" stroke-width=".8"/></svg>
<svg style="left:6px;top:451px" width="19" height="19" viewBox="0 0 19 19"><g fill="#fff" stroke="#2244aa" stroke-width="1"><rect x="1.500" y="1.500" width="6" height="5"/><rect x="11.500" y="1.500" width="6" height="5"/><rect x="5.500" y="10.500" width="6" height="5"/></g><path d="M4.500 6.500v2h10v-2M9 8.500v2" stroke="#2244aa" fill="none"/><circle cx="10" cy="9" r="3.800" fill="#bcd6f2" stroke="#444" stroke-width="1.200" opacity=".9"/><path d="M13 12l4.500 5" stroke="#c89020" stroke-width="2"/></svg>
<svg style="left:6px;top:561px" width="19" height="18" viewBox="0 0 19 18"><path d="M1 2h4l1 1.500h3v4H1z" fill="#f0d040" stroke="#a08010" stroke-width=".8"/><rect x="6.500" y="5.500" width="11" height="11" fill="#dfe4f7" stroke="#2a2a9a" stroke-width="1.200"/><rect x="9" y="8" width="6" height="3" fill="#2a2a9a"/><rect x="8.500" y="12" width="4" height="3" fill="#fff" stroke="#2a2a9a" stroke-width=".8"/></svg>
<svg style="left:6px;top:664px" width="19" height="17" viewBox="0 0 19 17"><path d="M1 5l7-3.500 9 4-7 4z" fill="#f5e9a0" stroke="#a09020" stroke-width=".8"/><path d="M1 5v6l9 5V9.500z" fill="#e6c838" stroke="#a09020" stroke-width=".8"/><path d="M10 9.500l7-4V11l-7 5z" fill="#c8c8e8" stroke="#7070a0" stroke-width=".8"/><path d="M12 13l4 3M16 13l-4 3" stroke="#222" stroke-width="1.200"/></svg>
<svg style="left:5px;top:739px" width="20" height="18" viewBox="0 0 20 18"><circle cx="10.500" cy="3.300" r="2.500" fill="#fff" stroke="#333"/><circle cx="5" cy="9.500" r="3" fill="#e8e8e8" stroke="#333"/><circle cx="15" cy="9.500" r="3" fill="#e8e8e8" stroke="#333"/><path d="M.500 17.500c0-6 9-6 9 0zM10.500 17.500c0-6 9-6 9 0z" fill="#4a60c8" stroke="#223"/></svg>
<div class="r" style="left:0px;top:1001px;width:1920px;height:31px;background:#e6e6e6;"></div>
<svg style="left:36px;top:1006px" width="13" height="16" viewBox="0 0 13 16"><path d="M.600 .600h8l3.500 3.500v11.300H.600z" fill="#fff" stroke="#2a3a9a" stroke-width="1.100"/><path d="M8.600 .600v3.500h3.500" fill="none" stroke="#2a3a9a" stroke-width=".9"/><path d="M3.500 3.500h3M3.500 6v7M3.500 8.500h2.500" stroke="#2a3a9a" stroke-width="1.300" fill="none"/></svg>
<span class="t" style="left:52.0px;top:1006.8px;font-size:11.3px;line-height:15px;color:#333;letter-spacing:0.191px;">Resource Allocation</span>
<div class="r" style="left:34px;top:1025px;width:122px;height:6px;background:#d9d9d9;"></div>
<div class="r" style="left:0px;top:1031px;width:1920px;height:1px;background:#cfcfcf;"></div>
<div class="r" style="left:0px;top:1032px;width:1920px;height:23px;background:#f1f1f1;"></div>
<span class="t" style="left:0.5px;top:1036.5px;font-size:11.3px;line-height:15px;color:#333;letter-spacing:0.183px;">Clone Element as New Version... : Clone the selected Element into current location as set version.</span>
<span class="t" style="left:1603.0px;top:1035.0px;font-size:13px;line-height:17px;color:#aaa;">−</span>
<div class="r" style="left:1619px;top:1036px;width:6px;height:14px;background:#f4f4f4;border:1px solid #aaa;"></div>
<div class="r" style="left:1625px;top:1043px;width:83px;height:1px;background:#b5b5b5;"></div>
<span class="t" style="left:1718.0px;top:1035.0px;font-size:13px;line-height:17px;color:#aaa;">+</span>
<span class="t" style="left:1741.0px;top:1037.0px;font-size:11px;line-height:14px;color:#aaa;letter-spacing:-0.873px;">CAP</span>
<span class="t" style="left:1780.0px;top:1037.0px;font-size:11px;line-height:14px;color:#aaa;letter-spacing:-0.517px;">NUM</span>
<span class="t" style="left:1824.0px;top:1037.0px;font-size:11px;line-height:14px;color:#aaa;letter-spacing:-0.961px;">SCRL</span>
<span class="t" style="left:1870.0px;top:1037.0px;font-size:11px;line-height:14px;color:#aaa;letter-spacing:-0.601px;">CLOUD</span>
<div class="r" style="left:1889px;top:166px;width:31px;height:865px;background:#e6e6e6;"></div>
<div class="r" style="left:1911px;top:173px;width:9px;height:25px;background:#d3d3d3;"></div>
<span class="t" style="left:1907px;top:174px;font-size:10.7px;line-height:16px;color:#444;letter-spacing:0.080px;transform-origin:0 0;transform:rotate(90deg);">Start</span>
<div class="r" style="left:27px;top:166px;width:933px;height:835px;background:#e4e4e4;border:1px solid #8d8d8d;border-width:1px 1.500px 1px 1.500px;"></div>
<div class="r" style="left:28px;top:193px;width:931px;height:1.2px;background:#8d8d8d;"></div>
<div class="r" style="left:28px;top:215px;width:931px;height:1px;background:#b5b5b5;"></div>
<svg style="left:34px;top:176.500px" width="11" height="10" viewBox="0 0 11 10" fill="none" stroke="#111" stroke-width="1.500"><path d="M1 1l4 4-4 4M5.800 1l4 4-4 4"/></svg>
<svg style="left:54px;top:172.8px" width="14" height="14" viewBox="0 0 14 14" fill="none"><path d="M3.500 4v7.500h4M3.500 7h4" stroke="#222" stroke-width="1"/><g fill="#f6c544" stroke="#a31515" stroke-width="1.100"><rect x="1" y="1" width="5" height="3"/><rect x="7.500" y="5.500" width="5" height="3"/><rect x="7.500" y="10" width="5" height="3"/></g></svg>
<span class="t" style="left:89.0px;top:174.5px;font-size:11.3px;line-height:15px;color:#7c7c7c;letter-spacing:0.141px;">Custom Diagram: "Manage Console Operations"</span>
<svg style="left:891px;top:175px" width="12" height="12" viewBox="0 0 12 12" fill="none" stroke="#555" stroke-width="1.100"><path d="M1.500 5.500L6 1.500l4.500 4M1.500 10L6 6l4.500 4"/></svg>
<svg style="left:922px;top:179px" width="8" height="5"><path d="M0 0h8l-4 4.500z" fill="#111"/></svg>
<svg style="left:943px;top:177px" width="9" height="9" viewBox="0 0 9 9"><path d="M1 1l7 7M8 1L1 8" stroke="#111" stroke-width="1.700"/></svg>
<div class="r" style="left:28.5px;top:195px;width:209px;height:21.5px;background:#fbfbfb;border:1px solid #c4c4c4;border-bottom:none;border-left:none;"></div>
<svg style="left:32px;top:198.6px" width="14" height="14" viewBox="0 0 14 14" fill="none"><path d="M3.500 4v7.500h4M3.500 7h4" stroke="#222" stroke-width="1"/><g fill="#f6c544" stroke="#a31515" stroke-width="1.100"><rect x="1" y="1" width="5" height="3"/><rect x="7.500" y="5.500" width="5" height="3"/><rect x="7.500" y="10" width="5" height="3"/></g></svg>
<span class="t" style="left:49.5px;top:199.5px;font-size:11.3px;line-height:15px;color:#333;letter-spacing:0.686px;">Manage Console Operations</span>
<svg style="left:222px;top:202px" width="9" height="9" viewBox="0 0 9 9"><path d="M1 1l7 7M8 1L1 8" stroke="#333" stroke-width="1.100"/></svg>
<svg style="left:928px;top:199px" width="26" height="11" viewBox="0 0 26 11" fill="none" stroke="#666" stroke-width="1"><path d="M6.500 1.500v8l-4.500-4zM19.500 1.500v8l4.500-4z"/></svg>
<div class="r" style="left:28.5px;top:216px;width:915px;height:769px;background:linear-gradient(180deg,#ffffff 0%,#fafbfd 25%,#f1f3f9 60%,#e8ecf6 100%);"></div>
<div class="r" style="left:943px;top:216px;width:15.8px;height:769px;background:#e0e0e0;"></div>
<div class="r" style="left:943px;top:216.3px;width:16px;height:15.5px;background:#fdfdfd;border:1px solid #c4c4c4"><svg style="left:-1px;top:-1px" width="16" height="15.5"><path d="M3.9 11.05h9l-4.500-5z" fill="#777"/></svg></div>
<div class="r" style="left:943px;top:232px;width:16px;height:519px;background:#fdfdfd;border:1px solid #c9c9c9;"></div>
<div class="r" style="left:943px;top:968.2px;width:16px;height:15.5px;background:#fdfdfd;border:1px solid #c4c4c4"><svg style="left:-1px;top:-1px" width="16" height="15.5"><path d="M3.9 6.05h9l-4.500 5z" fill="#777"/></svg></div>
<div class="r" style="left:28.5px;top:984.5px;width:930px;height:15.5px;background:#e0e0e0;"></div>
<div class="r" style="left:27.5px;top:984.5px;width:16px;height:15.5px;background:#fdfdfd;border:1px solid #c4c4c4"><svg style="left:-1px;top:-1px" width="16" height="15.5"><path d="M10.9 4.05v9l-5-4.500z" fill="#777"/></svg></div>
<div class="r" style="left:43.5px;top:984.5px;width:691px;height:15.5px;background:#fdfdfd;border:1px solid #c9c9c9;"></div>
<div class="r" style="left:927px;top:984.5px;width:16px;height:15.5px;background:#fdfdfd;border:1px solid #c4c4c4"><svg style="left:-1px;top:-1px" width="16" height="15.5"><path d="M5.9 4.05v9l5-4.500z" fill="#777"/></svg></div>
<span class="t" style="left:51.0px;top:227.0px;font-size:27.5px;line-height:36px;color:#d0d7eb;letter-spacing:-0.016px;font-weight:bold;">Manage Secure Access of Launch Console Version 1</span>
<svg style="left:0;top:0" width="960" height="1000" viewBox="0 0 960 1000"><path d="M449 329.5 L667.5 329.5 L667.5 430" fill="none" stroke="#93a8d6" stroke-width="1.100"/><path transform="translate(439.7 329.5) rotate(0)" d="M-9.300 0L0 -4.600 9.300 0 0 4.600z" fill="#dbe1f0" stroke="#93a8d6" stroke-width="1"/><path d="M282 363.5 L108.5 363.5 L108.5 474" fill="none" stroke="#93a8d6" stroke-width="1.100"/><path transform="translate(108.5 483) rotate(90)" d="M-9.300 0L0 -4.600 9.300 0 0 4.600z" fill="#dbe1f0" stroke="#93a8d6" stroke-width="1"/><path d="M453 448.5 L563 448.5" fill="none" stroke="#93a8d6" stroke-width="1.100"/><path transform="translate(443.7 448.5) rotate(0)" d="M-9.300 0L0 -4.600 9.300 0 0 4.600z" fill="#dbe1f0" stroke="#93a8d6" stroke-width="1"/><path d="M202 491 L286 467.5" fill="none" stroke="#93a8d6" stroke-width="1.100"/><path transform="translate(194 493.5) rotate(-16)" d="M-9.300 0L0 -4.600 9.300 0 0 4.600z" fill="#dbe1f0" stroke="#93a8d6" stroke-width="1"/><path d="M203 533 L290 546" fill="none" stroke="#93a8d6" stroke-width="1.100"/><path transform="translate(194.5 531.5) rotate(8)" d="M-9.300 0L0 -4.600 9.300 0 0 4.600z" fill="#dbe1f0" stroke="#93a8d6" stroke-width="1"/><path d="M458 529.5 L572 529.5 L572 482" fill="none" stroke="#93a8d6" stroke-width="1.100"/><path transform="translate(448.5 529.5) rotate(0)" d="M-9.300 0L0 -4.600 9.300 0 0 4.600z" fill="#dbe1f0" stroke="#93a8d6" stroke-width="1"/><path d="M371.5 599 L371.5 604.5 L563 604.5" fill="none" stroke="#93a8d6" stroke-width="1.100"/><path transform="translate(371.5 590) rotate(90)" d="M-9.300 0L0 -4.600 9.300 0 0 4.600z" fill="#dbe1f0" stroke="#93a8d6" stroke-width="1"/><path d="M107.5 563 L107.5 706.5 L290 706.5" fill="none" stroke="#93a8d6" stroke-width="1.100"/><path transform="translate(107.5 554) rotate(90)" d="M-9.300 0L0 -4.600 9.300 0 0 4.600z" fill="#dbe1f0" stroke="#93a8d6" stroke-width="1"/><path d="M458 708.5 L563 708.5" fill="none" stroke="#93a8d6" stroke-width="1.100"/><path transform="translate(448.5 708.5) rotate(0)" d="M-9.300 0L0 -4.600 9.300 0 0 4.600z" fill="#dbe1f0" stroke="#93a8d6" stroke-width="1"/><path d="M634.5 647 L634.5 682" fill="none" stroke="#93a8d6" stroke-width="1.100"/><path transform="translate(634.5 637.5) rotate(90)" d="M-9.300 0L0 -4.600 9.300 0 0 4.600z" fill="#dbe1f0" stroke="#93a8d6" stroke-width="1"/><path d="M727 708.5 L768 708.5" fill="none" stroke="#93a8d6" stroke-width="1.100"/><path d="M712 708.500l15-5.500v11z" fill="#dbe1f0" stroke="#93a8d6" stroke-width="1"/></svg>
<div class="r" style="left:282px;top:312px;width:148px;height:52px;background:linear-gradient(90deg,#dfe5f2 0%,#d5dcec 50%,#cdd5e9 100%);border:1px solid #94a8d8;border-radius:2.500px;box-shadow:3px 3px 2px rgba(160,172,214,.36);"><div class="r" style="left:8px;top:0;width:1px;height:50px;background:#94a8d8"></div><div class="r" style="left:10px;top:0;width:1px;height:50px;background:#94a8d8"></div></div><span class="t" style="left:298.5px;top:317.4px;font-size:9.4px;line-height:12px;color:#96aadd;letter-spacing:-0.330px;font-weight:bold;">REQ616 -Add Console</span><span class="t" style="left:298.5px;top:330.4px;font-size:9.4px;line-height:12px;color:#96aadd;letter-spacing:-0.426px;font-weight:bold;">Users</span>
<div class="r" style="left:286px;top:420px;width:148px;height:53px;background:linear-gradient(90deg,#dfe5f2 0%,#d5dcec 50%,#cdd5e9 100%);border:1px solid #94a8d8;border-radius:2.500px;box-shadow:3px 3px 2px rgba(160,172,214,.36);"><div class="r" style="left:8px;top:0;width:1px;height:51px;background:#94a8d8"></div><div class="r" style="left:10px;top:0;width:1px;height:51px;background:#94a8d8"></div></div><span class="t" style="left:302.5px;top:425.4px;font-size:9.4px;line-height:12px;color:#96aadd;letter-spacing:-0.310px;font-weight:bold;">REQ617 -Remove User</span><span class="t" style="left:423.8px;top:453.9px;font-size:8.5px;line-height:11px;color:#b9c4e4;font-style:italic;">A</span>
<div class="r" style="left:563px;top:430px;width:148px;height:52px;background:linear-gradient(90deg,#dfe5f2 0%,#d5dcec 50%,#cdd5e9 100%);border:1px solid #94a8d8;border-radius:2.500px;box-shadow:3px 3px 2px rgba(160,172,214,.36);"><div class="r" style="left:8px;top:0;width:1px;height:50px;background:#94a8d8"></div><div class="r" style="left:10px;top:0;width:1px;height:50px;background:#94a8d8"></div></div><span class="t" style="left:579.5px;top:434.6px;font-size:9.4px;line-height:12px;color:#96aadd;letter-spacing:-0.313px;font-weight:bold;">REQ025 - Store User</span><span class="t" style="left:579.5px;top:448.6px;font-size:9.4px;line-height:12px;color:#96aadd;letter-spacing:0.025px;font-weight:bold;">Details</span><span class="t" style="left:700.8px;top:462.9px;font-size:8.5px;line-height:11px;color:#b9c4e4;font-style:italic;">A</span>
<div class="r" style="left:36px;top:492px;width:149px;height:52px;background:linear-gradient(90deg,#dfe5f2 0%,#d5dcec 50%,#cdd5e9 100%);border:1px solid #94a8d8;border-radius:2.500px;box-shadow:3px 3px 2px rgba(160,172,214,.36);"><div class="r" style="left:8px;top:0;width:1px;height:50px;background:#94a8d8"></div><div class="r" style="left:10px;top:0;width:1px;height:50px;background:#94a8d8"></div></div><span class="t" style="left:52.5px;top:497.4px;font-size:9.4px;line-height:12px;color:#96aadd;letter-spacing:-0.270px;font-weight:bold;">REQ011 - Manage User</span><span class="t" style="left:52.5px;top:510.4px;font-size:9.4px;line-height:12px;color:#96aadd;letter-spacing:-0.104px;font-weight:bold;">Accounts</span>
<div class="r" style="left:290px;top:527px;width:149px;height:53px;background:linear-gradient(90deg,#dfe5f2 0%,#d5dcec 50%,#cdd5e9 100%);border:1px solid #94a8d8;border-radius:2.500px;box-shadow:3px 3px 2px rgba(160,172,214,.36);"><div class="r" style="left:8px;top:0;width:1px;height:51px;background:#94a8d8"></div><div class="r" style="left:10px;top:0;width:1px;height:51px;background:#94a8d8"></div></div><span class="t" style="left:306.5px;top:532.4px;font-size:9.4px;line-height:12px;color:#96aadd;letter-spacing:-0.238px;font-weight:bold;">REQ018 - Report on</span><span class="t" style="left:306.5px;top:545.4px;font-size:9.4px;line-height:12px;color:#96aadd;letter-spacing:-0.123px;font-weight:bold;">Console User Account</span>
<div class="r" style="left:563px;top:575px;width:148px;height:53px;background:linear-gradient(90deg,#dfe5f2 0%,#d5dcec 50%,#cdd5e9 100%);border:1px solid #94a8d8;border-radius:2.500px;box-shadow:3px 3px 2px rgba(160,172,214,.36);"><div class="r" style="left:8px;top:0;width:1px;height:51px;background:#94a8d8"></div><div class="r" style="left:10px;top:0;width:1px;height:51px;background:#94a8d8"></div></div><span class="t" style="left:579.5px;top:580.4px;font-size:9.4px;line-height:12px;color:#96aadd;letter-spacing:-0.452px;font-weight:bold;">REQ027 - Secure Access</span><span class="t" style="left:700.8px;top:608.9px;font-size:8.5px;line-height:11px;color:#b9c4e4;font-style:italic;">A</span>
<div class="r" style="left:290px;top:682px;width:149px;height:52px;background:linear-gradient(90deg,#dfe5f2 0%,#d5dcec 50%,#cdd5e9 100%);border:1px solid #94a8d8;border-radius:2.500px;box-shadow:3px 3px 2px rgba(160,172,214,.36);"><div class="r" style="left:8px;top:0;width:1px;height:50px;background:#94a8d8"></div><div class="r" style="left:10px;top:0;width:1px;height:50px;background:#94a8d8"></div></div><span class="t" style="left:306.5px;top:687.4px;font-size:9.4px;line-height:12px;color:#96aadd;letter-spacing:-0.452px;font-weight:bold;">REQ024 - Secure Access</span><span class="t" style="left:306.5px;top:700.4px;font-size:9.4px;line-height:12px;color:#96aadd;letter-spacing:-0.057px;font-weight:bold;">to Console</span>
<div class="r" style="left:563px;top:682px;width:148px;height:52px;background:linear-gradient(90deg,#dfe5f2 0%,#d5dcec 50%,#cdd5e9 100%);border:1px solid #94a8d8;border-radius:2.500px;box-shadow:3px 3px 2px rgba(160,172,214,.36);"><div class="r" style="left:8px;top:0;width:1px;height:50px;background:#94a8d8"></div><div class="r" style="left:10px;top:0;width:1px;height:50px;background:#94a8d8"></div></div><span class="t" style="left:579.5px;top:687.4px;font-size:9.4px;line-height:12px;color:#96aadd;letter-spacing:-0.202px;font-weight:bold;">REQ026 - Validate User</span>
<div class="r" style="left:768px;top:682px;width:148px;height:52px;background:linear-gradient(90deg,#dfe5f2 0%,#d5dcec 50%,#cdd5e9 100%);border:1px solid #94a8d8;border-radius:2.500px;box-shadow:3px 3px 2px rgba(160,172,214,.36);"><div class="r" style="left:8px;top:0;width:1px;height:50px;background:#94a8d8"></div><div class="r" style="left:10px;top:0;width:1px;height:50px;background:#94a8d8"></div></div><span class="t" style="left:784.5px;top:687.4px;font-size:9.4px;line-height:12px;color:#96aadd;letter-spacing:-0.406px;font-weight:bold;">REQ377 - Console</span><span class="t" style="left:784.5px;top:700.4px;font-size:9.4px;line-height:12px;color:#96aadd;letter-spacing:-0.018px;font-weight:bold;">Operator Must Have</span><span class="t" style="left:784.5px;top:713.4px;font-size:9.4px;line-height:12px;color:#96aadd;letter-spacing:-0.091px;font-weight:bold;">Security Clearance</span>
<div class="r" style="left:960px;top:166px;width:5.5px;height:835px;background:#dedede;"></div>
<div class="r" style="left:965.5px;top:166px;width:923px;height:56px;background:#e6e6e6;"></div>
<span class="t" style="left:970.0px;top:170.5px;font-size:19.3px;line-height:25px;color:#1c6ad0;letter-spacing:-0.248px;">Manage Console Operations</span>
<svg style="left:985px;top:203px" width="14" height="14" viewBox="0 0 14 14" fill="none"><path d="M3.500 4v7.500h4M3.500 7h4" stroke="#222" stroke-width="1"/><g fill="#f6c544" stroke="#a31515" stroke-width="1.100"><rect x="1" y="1" width="5" height="3"/><rect x="7.500" y="5.500" width="5" height="3"/><rect x="7.500" y="10" width="5" height="3"/></g></svg>
<span class="t" style="left:1000.5px;top:203.5px;font-size:11.3px;line-height:15px;color:#7c7c7c;letter-spacing:0.176px;">Custom Diagram: "Manage Console Operations"</span>
<svg style="left:1835px;top:180px" width="10" height="6"><path d="M0 0h10l-5 5.500z" fill="#666"/></svg>
<svg style="left:1854px;top:176px" width="10" height="12" viewBox="0 0 10 12" fill="none" stroke="#555" stroke-width="1.100"><path d="M3 1.500h4v5H3zM1.500 6.500h7M5 6.500v4.500M6.500 1.500v5"/></svg>
<svg style="left:1873px;top:178px" width="9" height="9" viewBox="0 0 9 9"><path d="M.500 .500l8 8M8.500 .500l-8 8" stroke="#444" stroke-width="1.100"/></svg>
<div class="r" style="left:966px;top:222px;width:907.5px;height:763px;background:linear-gradient(180deg,#ffffff 0%,#fafbfd 25%,#f1f3f9 60%,#e8ecf6 100%);"></div>
<div class="r" style="left:1867px;top:273px;width:6px;height:89px;background:#d3dae9;border-radius:3px 0 0 3px;border:1px solid #c5cde0;border-right:none;"></div>
<div class="r" style="left:1872.5px;top:222px;width:16px;height:778px;background:#e0e0e0;"></div>
<div class="r" style="left:1872.5px;top:222.3px;width:16px;height:15.5px;background:#fdfdfd;border:1px solid #c4c4c4"><svg style="left:-1px;top:-1px" width="16" height="15.5"><path d="M3.9 11.05h9l-4.500-5z" fill="#777"/></svg></div>
<div class="r" style="left:1872.5px;top:238px;width:16px;height:513px;background:#fdfdfd;border:1px solid #c9c9c9;"></div>
<div class="r" style="left:1872.5px;top:969px;width:16px;height:15.5px;background:#fdfdfd;border:1px solid #c4c4c4"><svg style="left:-1px;top:-1px" width="16" height="15.5"><path d="M3.9 6.05h9l-4.500 5z" fill="#777"/></svg></div>
<div class="r" style="left:966px;top:985px;width:907.5px;height:15.5px;background:#e0e0e0;"></div>
<div class="r" style="left:966px;top:985.2px;width:16px;height:15.5px;background:#fdfdfd;border:1px solid #c4c4c4"><svg style="left:-1px;top:-1px" width="16" height="15.5"><path d="M10.9 4.05v9l-5-4.500z" fill="#777"/></svg></div>
<div class="r" style="left:982px;top:985.2px;width:703.5px;height:15.3px;background:#fdfdfd;border:1px solid #c9c9c9;"></div>
<div class="r" style="left:1857px;top:985.2px;width:16px;height:15.5px;background:#fdfdfd;border:1px solid #c4c4c4"><svg style="left:-1px;top:-1px" width="16" height="15.5"><path d="M5.9 4.05v9l5-4.500z" fill="#777"/></svg></div>
<span class="t" style="left:990.0px;top:234.0px;font-size:27.5px;line-height:36px;color:#0000ff;letter-spacing:-0.016px;font-weight:bold;">Manage Secure Access of Launch Console Version 2</span>
<svg style="left:0;top:0" width="1890" height="1000" viewBox="0 0 1890 1000"><path d="M1208 342.5 L1008.5 342.5 L1008.5 479" fill="none" stroke="#93a8d6" stroke-width="1.100"/><path transform="translate(1008.5 488.5) rotate(90)" d="M-9.300 0L0 -4.600 9.300 0 0 4.600z" fill="#dbe1f0" stroke="#93a8d6" stroke-width="1"/><path d="M1008.5 569 L1008.5 711.5 L1060 711.5" fill="none" stroke="#93a8d6" stroke-width="1.100"/><path transform="translate(1008.5 559.5) rotate(90)" d="M-9.300 0L0 -4.600 9.300 0 0 4.600z" fill="#dbe1f0" stroke="#93a8d6" stroke-width="1"/><path d="M1355 378 L1483.5 436" fill="none" stroke="#93a8d6" stroke-width="1.100"/><path transform="translate(1347 373.5) rotate(27)" d="M-9.300 0L0 -4.600 9.300 0 0 4.600z" fill="#dbe1f0" stroke="#93a8d6" stroke-width="1"/><path d="M1392 456 L1467 458.5" fill="none" stroke="#93a8d6" stroke-width="1.100"/><path transform="translate(1382.7 455.5) rotate(2)" d="M-9.300 0L0 -4.600 9.300 0 0 4.600z" fill="#dbe1f0" stroke="#93a8d6" stroke-width="1"/><path d="M1477 488 L1384 527" fill="none" stroke="#93a8d6" stroke-width="1.100"/><path transform="translate(1377 530) rotate(-22)" d="M-9.300 0L0 -4.600 9.300 0 0 4.600z" fill="#dbe1f0" stroke="#93a8d6" stroke-width="1"/><path d="M1397 576.5 L1494 593.5" fill="none" stroke="#93a8d6" stroke-width="1.100"/><path transform="translate(1388 575) rotate(10)" d="M-9.300 0L0 -4.600 9.300 0 0 4.600z" fill="#dbe1f0" stroke="#93a8d6" stroke-width="1"/><path d="M1397.5 714.5 L1493 714.5" fill="none" stroke="#93a8d6" stroke-width="1.100"/><path transform="translate(1388 714.5) rotate(0)" d="M-9.300 0L0 -4.600 9.300 0 0 4.600z" fill="#dbe1f0" stroke="#93a8d6" stroke-width="1"/><path d="M1567.5 652 L1567.5 688" fill="none" stroke="#93a8d6" stroke-width="1.100"/><path transform="translate(1567.5 643) rotate(90)" d="M-9.300 0L0 -4.600 9.300 0 0 4.600z" fill="#dbe1f0" stroke="#93a8d6" stroke-width="1"/><path d="M1657 714.5 L1697 714.5" fill="none" stroke="#93a8d6" stroke-width="1.100"/><path d="M1642 714.500l15-5.500v11z" fill="#dbe1f0" stroke="#93a8d6" stroke-width="1"/></svg>
<div class="r" style="left:1208px;top:317px;width:148px;height:52px;background:linear-gradient(90deg,#dfe5f2 0%,#d5dcec 50%,#cdd5e9 100%);border:1px solid #94a8d8;border-radius:2.500px;box-shadow:3px 3px 2px rgba(160,172,214,.36);"><div class="r" style="left:8px;top:0;width:1px;height:50px;background:#94a8d8"></div><div class="r" style="left:10px;top:0;width:1px;height:50px;background:#94a8d8"></div></div><span class="t" style="left:1224.5px;top:322.4px;font-size:9.4px;line-height:12px;color:#96aadd;letter-spacing:-0.330px;font-weight:bold;">REQ616 -Add Console</span><span class="t" style="left:1224.5px;top:335.4px;font-size:9.4px;line-height:12px;color:#96aadd;letter-spacing:-0.426px;font-weight:bold;">Users</span>
<span class="t" style="left:1228.0px;top:375.0px;font-size:9px;line-height:12px;color:#9aaede;letter-spacing:-0.110px;font-style:italic;">(from Console Operation</span><span class="t" style="left:1229.8px;top:388.0px;font-size:9px;line-height:12px;color:#9aaede;letter-spacing:-0.153px;font-style:italic;">Management Version 1)</span>
<div class="r" style="left:1225px;top:426px;width:148px;height:53px;background:linear-gradient(90deg,#dfe5f2 0%,#d5dcec 50%,#cdd5e9 100%);border:1px solid #94a8d8;border-radius:2.500px;box-shadow:3px 3px 2px rgba(160,172,214,.36);"><div class="r" style="left:8px;top:0;width:1px;height:51px;background:#94a8d8"></div><div class="r" style="left:10px;top:0;width:1px;height:51px;background:#94a8d8"></div></div><span class="t" style="left:1241.5px;top:431.4px;font-size:9.4px;line-height:12px;color:#96aadd;letter-spacing:-0.310px;font-weight:bold;">REQ617 -Remove User</span><span class="t" style="left:1362.8px;top:459.9px;font-size:8.5px;line-height:11px;color:#b9c4e4;font-style:italic;">A</span>
<span class="t" style="left:1245.0px;top:484.0px;font-size:9px;line-height:12px;color:#9aaede;letter-spacing:-0.110px;font-style:italic;">(from Console Operation</span><span class="t" style="left:1246.8px;top:497.0px;font-size:9px;line-height:12px;color:#9aaede;letter-spacing:-0.153px;font-style:italic;">Management Version 1)</span>
<div class="r" style="left:1467px;top:436px;width:148px;height:52px;background:linear-gradient(90deg,#fdf5ec 0%,#f9e9da 55%,#f4dcc6 100%);border:1px solid #1e1e1e;border-radius:2.500px;box-shadow:3px 3px 2px rgba(120,120,140,.30);"><div class="r" style="left:8px;top:0;width:1px;height:50px;background:#1e1e1e"></div><div class="r" style="left:10px;top:0;width:1px;height:50px;background:#1e1e1e"></div></div><span class="t" style="left:1483.5px;top:440.6px;font-size:9.4px;line-height:12px;color:#000;letter-spacing:-0.313px;font-weight:bold;">REQ025 - Store User</span><span class="t" style="left:1483.5px;top:454.6px;font-size:9.4px;line-height:12px;color:#000;letter-spacing:0.025px;font-weight:bold;">Details</span><span class="t" style="left:1604.0px;top:468.9px;font-size:8.5px;line-height:11px;color:#e02020;font-weight:bold;font-style:italic;">A</span>
<div class="r" style="left:1494px;top:581px;width:148px;height:53px;background:linear-gradient(90deg,#fdf5ec 0%,#f9e9da 55%,#f4dcc6 100%);border:1px solid #1e1e1e;border-radius:2.500px;box-shadow:3px 3px 2px rgba(120,120,140,.30);"><div class="r" style="left:8px;top:0;width:1px;height:51px;background:#1e1e1e"></div><div class="r" style="left:10px;top:0;width:1px;height:51px;background:#1e1e1e"></div></div><span class="t" style="left:1510.5px;top:586.8px;font-size:9.4px;line-height:12px;color:#000;letter-spacing:-0.452px;font-weight:bold;">REQ027 - Secure Access</span><span class="t" style="left:1510.5px;top:599.8px;font-size:9.4px;line-height:12px;color:#000;letter-spacing:-0.099px;font-weight:bold;">as Approved by launch</span><span class="t" style="left:1510.5px;top:612.8px;font-size:9.4px;line-height:12px;color:#000;letter-spacing:0.163px;font-weight:bold;">Operator</span><span class="t" style="left:1631.0px;top:614.9px;font-size:8.5px;line-height:11px;color:#e02020;font-weight:bold;font-style:italic;">A</span>
<div class="r" style="left:1493px;top:688px;width:148px;height:52px;background:linear-gradient(90deg,#dfe5f2 0%,#d5dcec 50%,#cdd5e9 100%);border:1px solid #94a8d8;border-radius:2.500px;box-shadow:3px 3px 2px rgba(160,172,214,.36);"><div class="r" style="left:8px;top:0;width:1px;height:50px;background:#94a8d8"></div><div class="r" style="left:10px;top:0;width:1px;height:50px;background:#94a8d8"></div></div><span class="t" style="left:1509.5px;top:693.4px;font-size:9.4px;line-height:12px;color:#96aadd;letter-spacing:-0.202px;font-weight:bold;">REQ026 - Validate User</span>
<span class="t" style="left:1513.0px;top:746.0px;font-size:9px;line-height:12px;color:#9aaede;letter-spacing:-0.110px;font-style:italic;">(from Console Operation</span><span class="t" style="left:1514.8px;top:759.0px;font-size:9px;line-height:12px;color:#9aaede;letter-spacing:-0.153px;font-style:italic;">Management Version 1)</span>
<div class="r" style="left:1697px;top:689px;width:148px;height:52px;background:linear-gradient(90deg,#dfe5f2 0%,#d5dcec 50%,#cdd5e9 100%);border:1px solid #94a8d8;border-radius:2.500px;box-shadow:3px 3px 2px rgba(160,172,214,.36);"><div class="r" style="left:8px;top:0;width:1px;height:50px;background:#94a8d8"></div><div class="r" style="left:10px;top:0;width:1px;height:50px;background:#94a8d8"></div></div><span class="t" style="left:1713.5px;top:694.4px;font-size:9.4px;line-height:12px;color:#96aadd;letter-spacing:-0.406px;font-weight:bold;">REQ377 - Console</span><span class="t" style="left:1713.5px;top:707.4px;font-size:9.4px;line-height:12px;color:#96aadd;letter-spacing:-0.018px;font-weight:bold;">Operator Must Have</span><span class="t" style="left:1713.5px;top:720.4px;font-size:9.4px;line-height:12px;color:#96aadd;letter-spacing:-0.091px;font-weight:bold;">Security Clearance</span>
<span class="t" style="left:1717.0px;top:746.5px;font-size:9px;line-height:12px;color:#9aaede;letter-spacing:-0.110px;font-style:italic;">(from Console Operation</span><span class="t" style="left:1718.8px;top:759.5px;font-size:9px;line-height:12px;color:#9aaede;letter-spacing:-0.153px;font-style:italic;">Management Version 1)</span>
<div class="r" style="left:968px;top:491px;width:163.3px;height:66px;background:repeating-linear-gradient(135deg,#000 0,#000 0.700px,#fff 0.700px,#fff 2.121px);"></div>
<div class="r" style="left:975px;top:498px;width:150px;height:52px;background:#f4f6fa;"></div>
<div class="r" style="left:975px;top:498px;width:149px;height:52px;background:linear-gradient(90deg,#dfe5f2 0%,#d5dcec 50%,#cdd5e9 100%);border:1px solid #94a8d8;border-radius:2.500px;"><div class="r" style="left:8px;top:0;width:1px;height:50px;background:#94a8d8"></div><div class="r" style="left:10px;top:0;width:1px;height:50px;background:#94a8d8"></div></div><span class="t" style="left:991.5px;top:502.8px;font-size:9.4px;line-height:12px;color:#96aadd;letter-spacing:-0.270px;font-weight:bold;">REQ011 - Manage User</span><span class="t" style="left:991.5px;top:515.8px;font-size:9.4px;line-height:12px;color:#96aadd;letter-spacing:-0.104px;font-weight:bold;">Accounts</span>
<span class="t" style="left:995.0px;top:556.0px;font-size:9px;line-height:12px;color:#9aaede;letter-spacing:-0.110px;font-style:italic;">(from Console Operation</span><span class="t" style="left:996.8px;top:569.0px;font-size:9px;line-height:12px;color:#9aaede;letter-spacing:-0.153px;font-style:italic;">Management Version 1)</span>
<div class="r" style="left:968px;top:491px;width:8px;height:8px;background:#fff;border:1.300px solid #000;"></div>
<div class="r" style="left:968px;top:549px;width:8px;height:8px;background:#fff;border:1.300px solid #000;"></div>
<div class="r" style="left:1044.5px;top:491px;width:8px;height:8px;background:#fff;border:1.300px solid #000;"></div>
<div class="r" style="left:1044.5px;top:549px;width:8px;height:8px;background:#fff;border:1.300px solid #000;"></div>
<div class="r" style="left:1123.5px;top:491px;width:8px;height:8px;background:#fff;border:1.300px solid #000;"></div>
<div class="r" style="left:1123.5px;top:549px;width:8px;height:8px;background:#fff;border:1.300px solid #000;"></div>
<div class="r" style="left:968px;top:520px;width:8px;height:8px;background:#fff;border:1.300px solid #000;"></div>
<svg style="left:0;top:0" width="1890" height="1000" viewBox="0 0 1890 1000"><path transform="translate(1008.5 488.5) rotate(90)" d="M-9.300 0L0 -4.600 9.300 0 0 4.600z" fill="#dbe1f0" stroke="#93a8d6" stroke-width="1"/><path transform="translate(1008.5 559.5) rotate(90)" d="M-9.300 0L0 -4.600 9.300 0 0 4.600z" fill="#dbe1f0" stroke="#93a8d6" stroke-width="1"/><path d="M1008.5 569 L1008.5 600" fill="none" stroke="#93a8d6" stroke-width="1.100"/><path d="M1138 520l5-3 3 1 4-4M1147 514h3v3" stroke="#222" stroke-width="1" fill="none"/><path d="M1144 501v4" stroke="#222" stroke-width="1"/></svg>
<div class="r" style="left:1051.5px;top:472.5px;width:270.5px;height:32px;background:#fdfdfd;border:1px solid #d6d6d6;box-shadow:1.500px 3px 3.500px rgba(0,0,0,.5);"></div>
<span class="t" style="left:1057.5px;top:476.5px;font-size:18px;line-height:23px;color:#10107a;font-family:'Liberation Serif',serif;font-weight:bold;">A</span>
<span class="t" style="left:1080.5px;top:477.5px;font-size:10.8px;line-height:14px;color:#111;">A</span>
<div class="r" style="left:1087px;top:480px;width:3.5px;height:3.5px;background:#d428c0;"></div><div class="r" style="left:1091px;top:480px;width:3.5px;height:3.5px;background:#e8d020;"></div><div class="r" style="left:1089px;top:484px;width:3.5px;height:3.5px;background:#30c8c0;"></div>
<div class="r" style="left:1081px;top:492px;width:16px;height:5px;background:#0000f0;"></div>
<svg style="left:1102.5px;top:487px" width="6" height="4"><path d="M0 0h5.600l-2.800 3.200z" fill="#666"/></svg>
<svg style="left:1113px;top:478px" width="20" height="16" viewBox="0 0 20 16" fill="none"><path d="M2.500 6.500l4.500-4 5.500 5-4.500 4z" fill="#8a8ad0" stroke="#1a1a50" stroke-width="1.400"/><path d="M7 1l2 2" stroke="#1a1a50" stroke-width="1.200"/><path d="M12 6.500c2 .5 3 1.500 3 5" stroke="#2a50b0" stroke-width="2"/><path d="M12 12.500h5" stroke="#2a50b0" stroke-width="1.800"/></svg>
<div class="r" style="left:1115px;top:492px;width:16px;height:5px;background:#fff;"></div>
<svg style="left:1136.5px;top:487px" width="6" height="4"><path d="M0 0h5.600l-2.800 3.200z" fill="#666"/></svg>
<svg style="left:1148px;top:479px" width="18" height="13" viewBox="0 0 18 13"><path d="M2 6L14 1.500" stroke="#3a3a9a" stroke-width="1"/><rect x="1" y="7.500" width="4" height="4" fill="#d428c0"/><rect x="6" y="7.500" width="4" height="4" fill="#30c0c8"/><rect x="11" y="7.500" width="4" height="4" fill="#d8c020"/></svg>
<div class="r" style="left:1149px;top:492px;width:16px;height:5px;background:#000;"></div>
<svg style="left:1170.5px;top:487px" width="6" height="4"><path d="M0 0h5.600l-2.800 3.200z" fill="#666"/></svg>
<div class="r" style="left:1180px;top:478px;width:40px;height:19px;background:#fff;border:1px solid #c2c2c2;"></div>
<span class="t" style="left:1183.5px;top:481.0px;font-size:11.5px;line-height:15px;color:#555;">1</span>
<svg style="left:1207.500px;top:482.500px" width="7" height="12"><path d="M0 3.500h6l-3-3.200zM0 7.500h6l-3 3.200z" fill="#555"/></svg>
<svg style="left:1222px;top:479px" width="20" height="18" viewBox="0 0 20 18"><path d="M13.500 3.500l3-2.800 2 2-3 3z" fill="#3a7ae0" stroke="#1a3a90" stroke-width=".7"/><path d="M10.500 5.500l2.500-2 3.500 3.500-2 2.500z" fill="#e88a20" stroke="#222" stroke-width=".7"/><path d="M2 6.500l7.500-2.500 5.500 5.500-4 5.500-4-1.500z" fill="#f2e000" stroke="#222" stroke-width=".9"/><path d="M2 16.500l1-1.500 1 1.500 1-1.500 1 1.500 1-1.500 1 1.500 1-1.500 1 1.500" stroke="#e8e000" stroke-width="1.600" fill="none"/></svg>
<svg style="left:1246px;top:479px" width="18" height="18" viewBox="0 0 18 18"><path d="M3 14.500l1.500-4 6-6 2.500 2.500-6 6z" fill="#38a8e8" stroke="#1a3a90" stroke-width=".8"/><path d="M10 4.500l3.500-3.500 3 3-3.500 3.500z" fill="#20204a"/><path d="M1 15.500h8l-2-2z" fill="#20c0d8"/></svg>
<svg style="left:1269px;top:480px" width="18" height="15" viewBox="0 0 18 15" fill="none"><circle cx="3.800" cy="9.800" r="2.600" fill="#7a8ae0" stroke="#1a1a5a" stroke-width="1.200"/><circle cx="10.300" cy="9.800" r="2.600" fill="#7a8ae0" stroke="#1a1a5a" stroke-width="1.200"/><path d="M6.400 9h1.300M1.500 8l3.500-5.500 1 1M12.500 8l3-5 1 2" stroke="#1a1a5a" stroke-width="1"/></svg>
<svg style="left:1288px;top:487px" width="6" height="4"><path d="M0 0h5.600l-2.800 3.200z" fill="#666"/></svg>
<svg style="left:1300px;top:480px" width="17" height="17" viewBox="0 0 17 17"><circle cx="8.500" cy="8.500" r="7.400" fill="#fff" stroke="#5a5ac8" stroke-width="1"/><circle cx="8.500" cy="8.500" r="5.800" fill="#7272d2" stroke="#5050c0" stroke-width=".8"/><path d="M6.600 7a1.900 1.900 0 1 1 2.900 1.600c-.700 .500-1 .800-1 1.500" stroke="#fff" stroke-width="1.300" fill="none"/><circle cx="8.500" cy="12.200" r=".9" fill="#fff"/></svg>
<div class="r" style="left:1052px;top:517.5px;width:328px;height:530.5px;background:#fcfcfc;border:1px solid #d4d4d4;box-shadow:2px 3px 6px rgba(0,0,0,.40);"></div>
<div class="r" style="left:1054.5px;top:720px;width:322.5px;height:22px;background:#e0e0e0;"></div>
<span class="t" style="left:1083.0px;top:524.5px;font-size:11.3px;line-height:15px;color:#3a3a3a;letter-spacing:-0.007px;">E<span style="text-decoration:underline;text-underline-offset:0.800px">x</span>tensions</span>
<svg style="left:1369px;top:526.5px" width="5" height="8"><path d="M0 0l4 3.700L0 7.400z" fill="#222"/></svg>
<span class="t" style="left:1083.0px;top:554.5px;font-size:11.3px;line-height:15px;color:#3a3a3a;letter-spacing:-0.040px;"><span style="text-decoration:underline;text-underline-offset:0.800px">P</span>roperties...</span>
<span class="t" style="left:1283.0px;top:554.5px;font-size:11.3px;line-height:15px;color:#3a3a3a;letter-spacing:0.530px;">Alt+Return</span>
<span class="t" style="left:1083.0px;top:576.5px;font-size:11.3px;line-height:15px;color:#3a3a3a;letter-spacing:0.025px;">Properties Page</span>
<svg style="left:1369px;top:578.5px" width="5" height="8"><path d="M0 0l4 3.700L0 7.400z" fill="#222"/></svg>
<span class="t" style="left:1083.0px;top:598.5px;font-size:11.3px;line-height:15px;color:#3a3a3a;letter-spacing:0.268px;">Advanced</span>
<svg style="left:1369px;top:600.5px" width="5" height="8"><path d="M0 0l4 3.700L0 7.400z" fill="#222"/></svg>
<span class="t" style="left:1083.0px;top:628.5px;font-size:11.3px;line-height:15px;color:#3a3a3a;letter-spacing:0.171px;">New Child Element</span>
<svg style="left:1369px;top:630.5px" width="5" height="8"><path d="M0 0l4 3.700L0 7.400z" fill="#222"/></svg>
<span class="t" style="left:1083.0px;top:650.5px;font-size:11.3px;line-height:15px;color:#3a3a3a;letter-spacing:0.121px;">New Child Diagram</span>
<svg style="left:1369px;top:652.5px" width="5" height="8"><path d="M0 0l4 3.700L0 7.400z" fill="#222"/></svg>
<span class="t" style="left:1083.0px;top:672.5px;font-size:11.3px;line-height:15px;color:#3a3a3a;letter-spacing:0.147px;">Features &amp; Properties</span>
<svg style="left:1369px;top:674.5px" width="5" height="8"><path d="M0 0l4 3.700L0 7.400z" fill="#222"/></svg>
<span class="t" style="left:1083.0px;top:702.5px;font-size:11.3px;line-height:15px;color:#3a3a3a;letter-spacing:0.207px;">Insert Related Elements...</span>
<span class="t" style="left:1083.0px;top:724.5px;font-size:11.3px;line-height:15px;color:#3a3a3a;letter-spacing:0.059px;">Clone Element as New Version...</span>
<span class="t" style="left:1083.0px;top:754.5px;font-size:11.3px;line-height:15px;color:#3a3a3a;letter-spacing:0.273px;">Create Lin<span style="text-decoration:underline;text-underline-offset:0.800px">k</span>ed Document</span>
<span class="t" style="left:1283.0px;top:754.5px;font-size:11.3px;line-height:15px;color:#3a3a3a;letter-spacing:0.387px;">Control+Alt+D</span>
<span class="t" style="left:1083.0px;top:776.5px;font-size:11.3px;line-height:15px;color:#3a3a3a;letter-spacing:0.275px;">Generate Documentation</span>
<span class="t" style="left:1083.0px;top:806.5px;font-size:11.3px;line-height:15px;color:#3a3a3a;letter-spacing:0.104px;">Find</span>
<svg style="left:1369px;top:808.5px" width="5" height="8"><path d="M0 0l4 3.700L0 7.400z" fill="#222"/></svg>
<span class="t" style="left:1083.0px;top:828.5px;font-size:11.3px;line-height:15px;color:#3a3a3a;letter-spacing:0.256px;"><span style="text-decoration:underline;text-underline-offset:0.800px">A</span>ppearance</span>
<svg style="left:1369px;top:830.5px" width="5" height="8"><path d="M0 0l4 3.700L0 7.400z" fill="#222"/></svg>
<span class="t" style="left:1083.0px;top:850.5px;font-size:11.3px;line-height:15px;color:#3a3a3a;letter-spacing:0.245px;">Info view</span>
<svg style="left:1369px;top:852.5px" width="5" height="8"><path d="M0 0l4 3.700L0 7.400z" fill="#222"/></svg>
<span class="t" style="left:1083.0px;top:880.5px;font-size:11.3px;line-height:15px;color:#3a3a3a;letter-spacing:0.035px;">Lock Element...</span>
<span class="t" style="left:1083.0px;top:902.5px;font-size:11.3px;line-height:15px;color:#3a3a3a;letter-spacing:0.303px;">Selectable</span>
<svg style="left:1062px;top:904.5px" width="9" height="8" viewBox="0 0 9 8"><path d="M1 4l2.500 2.500L8 1" stroke="#444" stroke-width="1.300" fill="none"/></svg>
<span class="t" style="left:1083.0px;top:924.5px;font-size:11.3px;line-height:15px;color:#3a3a3a;letter-spacing:0.178px;">Printable</span>
<svg style="left:1062px;top:926.5px" width="9" height="8" viewBox="0 0 9 8"><path d="M1 4l2.500 2.500L8 1" stroke="#444" stroke-width="1.300" fill="none"/></svg>
<span class="t" style="left:1083.0px;top:946.5px;font-size:11.3px;line-height:15px;color:#3a3a3a;letter-spacing:0.049px;">Dockable</span>
<span class="t" style="left:1083.0px;top:968.5px;font-size:11.3px;line-height:15px;color:#3a3a3a;letter-spacing:0.222px;">Z-Order</span>
<svg style="left:1369px;top:970.5px" width="5" height="8"><path d="M0 0l4 3.700L0 7.400z" fill="#222"/></svg>
<span class="t" style="left:1083.0px;top:998.5px;font-size:11.3px;line-height:15px;color:#3a3a3a;letter-spacing:-0.065px;">UML Help</span>
<span class="t" style="left:1083.0px;top:1028.5px;font-size:11.3px;line-height:15px;color:#3a3a3a;letter-spacing:0.007px;"><span style="text-decoration:underline;text-underline-offset:0.800px">D</span>elete 'REQ011 - Manage Use...</span>
<span class="t" style="left:1283.0px;top:1028.5px;font-size:11.3px;line-height:15px;color:#3a3a3a;letter-spacing:0.202px;">Control+D</span>
<div class="r" style="left:1083.5px;top:546px;width:290.5px;height:1px;background:#c6c6c6;"></div>
<div class="r" style="left:1083.5px;top:620px;width:290.5px;height:1px;background:#c6c6c6;"></div>
<div class="r" style="left:1083.5px;top:694px;width:290.5px;height:1px;background:#c6c6c6;"></div>
<div class="r" style="left:1083.5px;top:746px;width:290.5px;height:1px;background:#c6c6c6;"></div>
<div class="r" style="left:1083.5px;top:798px;width:290.5px;height:1px;background:#c6c6c6;"></div>
<div class="r" style="left:1083.5px;top:872px;width:290.5px;height:1px;background:#c6c6c6;"></div>
<div class="r" style="left:1083.5px;top:990px;width:290.5px;height:1px;background:#c6c6c6;"></div>
<div class="r" style="left:1083.5px;top:1020px;width:290.5px;height:1px;background:#c6c6c6;"></div>
</div>
<div class="r" style="left:0px;top:1086px;width:1950px;height:4px;background:#fff;"></div>
</body></html>
